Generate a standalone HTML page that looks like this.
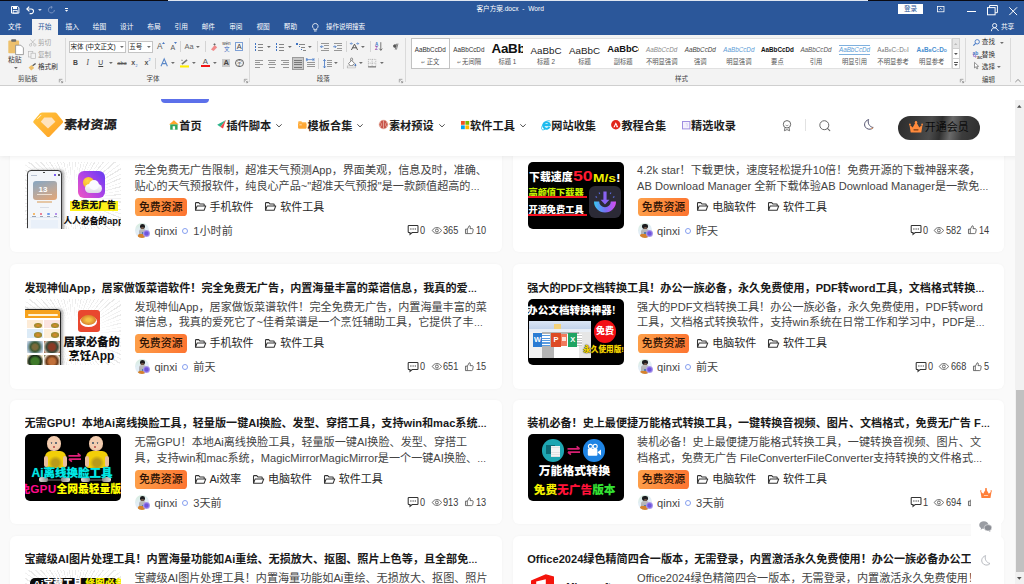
<!DOCTYPE html>
<html lang="zh-CN"><head><meta charset="utf-8"><title>客户方案.docx - Word</title>
<style>
*{box-sizing:border-box}
html,body{margin:0;padding:0}
body{width:1024px;height:584px;overflow:hidden;position:relative;background:#fff;font-family:"Liberation Sans","Noto Sans CJK SC",sans-serif;color:#222}
.abs,.abs>*{position:absolute}
/* ---------- Word ribbon ---------- */
#word{position:absolute;left:0;top:0;width:1024px;height:86px;background:#f3f3f3;overflow:hidden;z-index:30}
#word .blue{position:absolute;left:0;top:0;width:1024px;height:34.5px;background:#2b579a}
#word .t{position:absolute;white-space:nowrap;font-size:6.7px;line-height:8px;color:#fff}
#word .k{position:absolute;white-space:nowrap;font-size:6.6px;line-height:8px;color:#333}
#word .g{color:#a0a0a0}
#word .sep{position:absolute;width:1px;background:#dadada;top:38px;height:44px}
#word .ms{position:absolute;width:1px;background:#d4d4d4;height:11px}
#word .dd{position:absolute;width:0;height:0;border-left:1.9px solid transparent;border-right:1.9px solid transparent;border-top:2.1px solid #707070}
#word svg{position:absolute;overflow:visible}
/* ---------- web page ---------- */
#web{position:absolute;left:0;top:86px;width:1024px;height:498px;background:#fafafa;overflow:hidden}
#hdr{position:absolute;left:0;top:0;width:1024px;height:70px;background:#fff;box-shadow:0 1px 5px rgba(0,0,0,.07);z-index:10}
.card{position:absolute;width:491.5px;height:124.2px;background:#fff;border-radius:6px;box-shadow:0 0 3px rgba(0,0,0,.035)}
.card .ttl{position:absolute;left:14.5px;top:16.2px;width:470px;font-size:11.1px;line-height:15px;font-weight:bold;color:#1a1a1a;white-space:nowrap;overflow:hidden}
.card .th{position:absolute;left:15px;top:34.2px;width:96px;height:66.6px;border-radius:5px;overflow:hidden}
.card .ds{position:absolute;left:124.4px;top:35.2px;width:360px;font-size:11.1px;line-height:15.6px;color:#444;white-space:nowrap}
.card .tags{position:absolute;left:125px;top:70.1px;height:18.4px;white-space:nowrap;font-size:11px;line-height:19.4px;color:#262626}
.card .vip{position:absolute;left:0;top:0;height:18.4px;width:51.5px;border-radius:3.6px;background:linear-gradient(100deg,#fda04a,#fd7430);color:#2e1406;text-align:center;font-size:10.9px;line-height:19.4px;font-weight:500}
.card .meta{position:absolute;left:125px;top:95.6px;height:14px;white-space:nowrap;font-size:11.1px;line-height:14px;color:#444}
.card .st{position:absolute;top:94.9px;height:14px;font-size:9.6px;line-height:14px;color:#444;white-space:nowrap}
.card svg{position:absolute;overflow:visible}
.el{font-size:.84em}
</style></head><body>
<div id="word">
<div class="blue"></div>
<div style="position:absolute;left:0;top:0;width:168px;height:1.2px;background:#0a0a12"></div>
<div style="position:absolute;left:168px;top:0;width:700px;height:1px;background:#dfe6f1"></div>
<div style="position:absolute;left:868px;top:0;width:156px;height:1.2px;background:#0a0a12"></div>
<div style="position:absolute;left:32px;top:19px;width:26px;height:16px;background:#f3f3f3"></div>
<svg style="left:10.6px;top:6.2px" width="8.4" height="7.6" viewBox="0 0 8.4 7.6"><path d="M0.5 0.5h6.2l1.2 1.2v5.4h-7.4z" fill="none" stroke="#fff" stroke-width="1"/><rect x="2" y="0.8" width="4" height="2.2" fill="#fff"/><rect x="2.2" y="4.6" width="4" height="2.6" fill="none" stroke="#fff" stroke-width=".8"/></svg>
<svg style="left:26px;top:5.8px" width="9" height="8" viewBox="0 0 9 8"><path d="M3.2 0.6L0.8 3l2.6 2.4" fill="none" stroke="#fff" stroke-width="1.1"/><path d="M1 3h4.2a2.3 2.3 0 0 1 0 4.6H3.6" fill="none" stroke="#fff" stroke-width="1.1"/></svg>
<svg style="left:37.50px;top:8.75px" width="3.8" height="2.1" viewBox="0 0 3.8 2.1"><path d="M0 0h3.8L1.9 2.1z" fill="#d5def0"/></svg>
<svg style="left:47.5px;top:6px" width="7" height="7.6" viewBox="0 0 7 7.6"><path d="M4.6 1.2A3 3 0 1 0 6.4 4" fill="none" stroke="#7f97c4" stroke-width=".9"/><path d="M3.4 0.2v2.4" stroke="#7f97c4" stroke-width=".9"/></svg>
<div style="position:absolute;left:65.3px;top:8.1px;width:3.2px;height:.9px;background:#fff"></div>
<svg style="left:65.30px;top:9.55px" width="3.2" height="1.7" viewBox="0 0 3.2 1.7"><path d="M0 0h3.2L1.6 1.7z" fill="#fff"/></svg>
<div class="t" style="left:476.5px;top:4.80px;font-size:6.6px">客户方案.docx&nbsp; -&nbsp; Word</div>
<div style="position:absolute;left:898.4px;top:3.8px;width:24.4px;height:10.2px;background:#fff;color:#2b579a;font-size:6.6px;line-height:10.2px;text-align:center">登录</div>
<svg style="left:936.8px;top:6px" width="7.4" height="6.2" viewBox="0 0 7.4 6.2"><rect x=".4" y=".4" width="6.6" height="5.4" fill="none" stroke="#fff" stroke-width=".8"/><path d="M2.4 3.8L3.7 2.3 5 3.8" fill="none" stroke="#fff" stroke-width=".8"/></svg>
<div style="position:absolute;left:967.4px;top:10.8px;width:8.5px;height:1px;background:#fff"></div>
<svg style="left:986.8px;top:5.4px" width="11" height="10.4" viewBox="0 0 11 10.4"><rect x=".5" y="2.6" width="7.6" height="7.2" fill="none" stroke="#fff" stroke-width="1"/><path d="M2.6 2.6V.5h7.8v7.2H8.2" fill="none" stroke="#fff" stroke-width="1"/></svg>
<svg style="left:1008.7px;top:6.7px" width="8.4" height="8.4" viewBox="0 0 8.4 8.4"><path d="M.3 .3l7.8 7.8M8.1 .3L.3 8.1" stroke="#fff" stroke-width="1"/></svg>
<svg style="left:990.7px;top:23px" width="8" height="8.6" viewBox="0 0 8 8.6"><circle cx="3.6" cy="2.6" r="2.1" fill="none" stroke="#fff" stroke-width=".9"/><path d="M.4 8.2c0-2.2 1.3-3.3 3.2-3.3 1 0 1.7.3 2.2.8" fill="none" stroke="#fff" stroke-width=".9"/><path d="M5.6 5.6l2 2.4" stroke="#fff" stroke-width=".9"/></svg>
<div class="t" style="left:1000.9px;top:23.20px;">共享</div>
<div class="t" style="left:8px;top:23.20px;">文件</div>
<div class="t" style="left:65.6px;top:23.20px;">插入</div>
<div class="t" style="left:92.75px;top:23.20px;">绘图</div>
<div class="t" style="left:120px;top:23.20px;">设计</div>
<div class="t" style="left:147.3px;top:23.20px;">布局</div>
<div class="t" style="left:174.5px;top:23.20px;">引用</div>
<div class="t" style="left:201.7px;top:23.20px;">邮件</div>
<div class="t" style="left:229.2px;top:23.20px;">审阅</div>
<div class="t" style="left:256.4px;top:23.20px;">视图</div>
<div class="t" style="left:283.8px;top:23.20px;">帮助</div>
<div class="t" style="left:38px;top:23.20px;color:#2b579a">开始</div>
<svg style="left:312px;top:22.6px" width="6.6" height="9" viewBox="0 0 6.6 9"><path d="M3.3 .5a2.7 2.7 0 0 1 1.5 5v1.2H1.8V5.5A2.7 2.7 0 0 1 3.3 .5z" fill="none" stroke="#fff" stroke-width=".8"/><path d="M2 8h2.6" stroke="#fff" stroke-width=".8"/></svg>
<div class="t" style="left:326px;top:23.20px;font-size:6.5px">操作说明搜索</div>
<div style="position:absolute;left:0;top:84.6px;width:1024px;height:1.2px;background:#cfcfcf"></div>
<div class="sep" style="left:64.7px"></div>
<div class="sep" style="left:249.2px"></div>
<div class="sep" style="left:405.4px"></div>
<div class="sep" style="left:965px"></div>
<div class="sep" style="left:1010px"></div>
<svg style="left:8px;top:39.2px" width="16" height="16" viewBox="0 0 16 16"><rect x=".3" y="1.6" width="10.8" height="12.6" rx=".8" fill="#edc06c"/><rect x="3.2" y=".2" width="5" height="2.6" rx=".8" fill="#6b6b6b"/><path d="M7.6 6.2h5.2l2.6 2.6v6.8H7.6z" fill="#fff" stroke="#8a8a8a" stroke-width=".8"/></svg>
<div class="k" style="left:8px;top:56.40px;font-size:6.8px">粘贴</div>
<svg style="left:13.70px;top:66.75px" width="3.8" height="2.1" viewBox="0 0 3.8 2.1"><path d="M0 0h3.8L1.9 2.1z" fill="#6e6e6e"/></svg>
<svg style="left:28.5px;top:39px" width="7.5" height="7.5" viewBox="0 0 7.5 7.5"><path d="M1.4 .4l4 4.6M6 .4L2 5" stroke="#b9b9b9" stroke-width=".8"/><circle cx="1.6" cy="6" r="1.2" fill="none" stroke="#b9b9b9" stroke-width=".7"/><circle cx="5.8" cy="6" r="1.2" fill="none" stroke="#b9b9b9" stroke-width=".7"/></svg>
<div class="k g" style="left:38px;top:38.60px;">剪切</div>
<svg style="left:28px;top:51px" width="8" height="8" viewBox="0 0 8 8"><rect x=".4" y=".4" width="4.4" height="5.6" fill="none" stroke="#b9b9b9" stroke-width=".7"/><rect x="3" y="2.2" width="4.4" height="5.4" fill="#f3f3f3" stroke="#b9b9b9" stroke-width=".7"/></svg>
<div class="k g" style="left:38px;top:51.00px;">复制</div>
<svg style="left:28.2px;top:63px" width="8.5" height="8.5" viewBox="0 0 8.5 8.5"><path d="M.6 4.4l3-2.4 2.6 3-3 2.6z" fill="#edc06c"/><path d="M4.6 2.8L7.6 .4" stroke="#555" stroke-width="1.3"/></svg>
<div class="k" style="left:38px;top:63.30px;">格式刷</div>
<div class="k" style="left:18px;top:75.40px;font-size:6.5px;color:#444">剪贴板</div>
<svg style="left:58.6px;top:79px" width="4" height="4" viewBox="0 0 4 4"><path d="M.3 3.4V.3h3.1" fill="none" stroke="#777" stroke-width=".6"/><path d="M1.4 1.4l2.2 2.2M3.7 1.9v1.8H1.9" fill="none" stroke="#777" stroke-width=".6"/></svg>
<svg style="left:243.6px;top:79px" width="4" height="4" viewBox="0 0 4 4"><path d="M.3 3.4V.3h3.1" fill="none" stroke="#777" stroke-width=".6"/><path d="M1.4 1.4l2.2 2.2M3.7 1.9v1.8H1.9" fill="none" stroke="#777" stroke-width=".6"/></svg>
<svg style="left:399.4px;top:79px" width="4" height="4" viewBox="0 0 4 4"><path d="M.3 3.4V.3h3.1" fill="none" stroke="#777" stroke-width=".6"/><path d="M1.4 1.4l2.2 2.2M3.7 1.9v1.8H1.9" fill="none" stroke="#777" stroke-width=".6"/></svg>
<svg style="left:959.5px;top:79px" width="4" height="4" viewBox="0 0 4 4"><path d="M.3 3.4V.3h3.1" fill="none" stroke="#777" stroke-width=".6"/><path d="M1.4 1.4l2.2 2.2M3.7 1.9v1.8H1.9" fill="none" stroke="#777" stroke-width=".6"/></svg>
<div style="position:absolute;left:69px;top:40.6px;width:57.3px;height:12.4px;background:#fff;border:.8px solid #c4c4c4"></div>
<div class="k" style="left:70.6px;top:42.90px;font-size:6.5px;color:#222">宋体 (中文正文)</div>
<svg style="left:120.40px;top:46.05px" width="3.8" height="2.1" viewBox="0 0 3.8 2.1"><path d="M0 0h3.8L1.9 2.1z" fill="#6e6e6e"/></svg>
<div style="position:absolute;left:127.6px;top:40.6px;width:25px;height:12.4px;background:#fff;border:.8px solid #c4c4c4"></div>
<div class="k" style="left:129.2px;top:42.90px;font-size:6.5px;color:#222">五号</div>
<svg style="left:146.70px;top:46.05px" width="3.8" height="2.1" viewBox="0 0 3.8 2.1"><path d="M0 0h3.8L1.9 2.1z" fill="#6e6e6e"/></svg>
<div class="k" style="left:157px;top:43.30px;font-size:8.2px;color:#555">A</div>
<svg style="left:161.6px;top:42.2px" width="3" height="2" viewBox="0 0 3 2"><path d="M0 2L1.5 0 3 2z" fill="#4a78c2"/></svg>
<div class="k" style="left:170.5px;top:43.80px;font-size:7px;color:#555">A</div>
<svg style="left:174.2px;top:42.4px" width="3" height="2" viewBox="0 0 3 2"><path d="M0 0h3L1.5 2z" fill="#4a78c2"/></svg>
<div class="ms" style="left:180.4px;top:41.4px"></div>
<div class="k" style="left:184.6px;top:43.00px;font-size:7.4px;color:#666">Aa</div>
<svg style="left:195.50px;top:46.05px" width="3.8" height="2.1" viewBox="0 0 3.8 2.1"><path d="M0 0h3.8L1.9 2.1z" fill="#6e6e6e"/></svg>
<div class="ms" style="left:205px;top:41.4px"></div>
<svg style="left:210px;top:42.6px" width="8" height="8" viewBox="0 0 8 8"><path d="M1 6.4L4.6 2l2.6 2.2L3.6 8z" fill="#f08a8a"/><path d="M3.2 1.2l1.6-.9 1 1.2-1.3 1z" fill="#666"/></svg>
<div class="k" style="left:222.2px;top:40.20px;font-size:4.6px;color:#444">wén</div>
<div class="k" style="left:223.9px;top:44.90px;font-size:5.6px;color:#3a6bc0">文</div>
<div style="position:absolute;left:235.3px;top:42.4px;width:8px;height:8.6px;border:.9px solid #7da0d6;color:#444;font-size:7.4px;line-height:7.2px;text-align:center">A</div>
<div class="k" style="left:72.9px;top:59.00px;font-weight:bold;font-size:6.8px;color:#444">B</div>
<div class="k" style="left:86.4px;top:59.00px;font-style:italic;font-family:'Liberation Serif',serif;font-size:7.4px;color:#444">I</div>
<div class="k" style="left:98.3px;top:59.00px;text-decoration:underline;font-size:6.8px;color:#444">U</div>
<svg style="left:108.50px;top:62.35px" width="3.8" height="2.1" viewBox="0 0 3.8 2.1"><path d="M0 0h3.8L1.9 2.1z" fill="#6e6e6e"/></svg>
<div class="k" style="left:117.3px;top:59.20px;font-size:5.8px;text-decoration:line-through;color:#555">abc</div>
<div class="k" style="left:131.2px;top:59.30px;font-size:7px;font-weight:bold;color:#555">x</div>
<div class="k" style="left:135.4px;top:61.60px;font-size:3.6px;color:#3a6bc0">2</div>
<div class="k" style="left:144.4px;top:59.30px;font-size:7px;font-weight:bold;color:#555">x</div>
<div class="k" style="left:148.6px;top:56.40px;font-size:3.6px;color:#3a6bc0">2</div>
<div class="ms" style="left:155.4px;top:57.6px"></div>
<svg style="left:159.8px;top:58.4px" width="8.4" height="9" viewBox="0 0 8.4 9"><path d="M1 8.2L4.2 .8l3.2 7.4M2.3 5.6h3.8" fill="none" stroke="#5b88c8" stroke-width="1.1"/></svg>
<svg style="left:170.70px;top:62.35px" width="3.8" height="2.1" viewBox="0 0 3.8 2.1"><path d="M0 0h3.8L1.9 2.1z" fill="#6e6e6e"/></svg>
<svg style="left:179.9px;top:58px" width="9" height="10" viewBox="0 0 9 10"><path d="M1.4 5.6L6.6 1.2l1 1.2-5.2 4.4z" fill="#777"/><path d="M1 2.2l2 .2" stroke="#777" stroke-width=".7"/><rect x="0" y="7.4" width="9" height="2.1" fill="#ffee00"/></svg>
<svg style="left:192.10px;top:62.35px" width="3.8" height="2.1" viewBox="0 0 3.8 2.1"><path d="M0 0h3.8L1.9 2.1z" fill="#6e6e6e"/></svg>
<div class="k" style="left:202.7px;top:57.80px;font-size:7.8px;color:#555">A</div>
<div style="position:absolute;left:201.1px;top:65.4px;width:8.8px;height:2.1px;background:#f01414"></div>
<svg style="left:213.00px;top:62.35px" width="3.8" height="2.1" viewBox="0 0 3.8 2.1"><path d="M0 0h3.8L1.9 2.1z" fill="#6e6e6e"/></svg>
<div style="position:absolute;left:222.4px;top:59.3px;width:7.6px;height:7.6px;background:#c9c9c9;color:#444;font-size:7.6px;line-height:7.6px;text-align:center;font-weight:bold">A</div>
<div style="position:absolute;left:235px;top:58.8px;width:8.6px;height:8.6px;border:.7px solid #666;border-radius:50%;color:#555;font-size:5.2px;line-height:7.2px;text-align:center">字</div>
<div class="k" style="left:146.6px;top:75.40px;font-size:6.5px;color:#444">字体</div>
<div style="position:absolute;left:255px;top:43.40px;width:1.4px;height:1.4px;background:#3f74c4"></div>
<div style="position:absolute;left:255px;top:46.30px;width:1.4px;height:1.4px;background:#3f74c4"></div>
<div style="position:absolute;left:255px;top:49.20px;width:1.4px;height:1.4px;background:#3f74c4"></div>
<div style="position:absolute;left:257.60px;top:43.70px;width:5.4px;height:0.8px;background:#858585"></div><div style="position:absolute;left:257.60px;top:46.60px;width:5.4px;height:0.8px;background:#858585"></div><div style="position:absolute;left:257.60px;top:49.50px;width:5.4px;height:0.8px;background:#858585"></div>
<svg style="left:267.10px;top:45.95px" width="3.8" height="2.1" viewBox="0 0 3.8 2.1"><path d="M0 0h3.8L1.9 2.1z" fill="#6e6e6e"/></svg>
<div style="position:absolute;left:276.2px;top:43.20px;width:.9px;height:2px;background:#3f74c4"></div>
<div style="position:absolute;left:276.2px;top:46.10px;width:.9px;height:2px;background:#3f74c4"></div>
<div style="position:absolute;left:276.2px;top:49.00px;width:.9px;height:2px;background:#3f74c4"></div>
<div style="position:absolute;left:278.60px;top:43.70px;width:5.4px;height:0.8px;background:#858585"></div><div style="position:absolute;left:278.60px;top:46.60px;width:5.4px;height:0.8px;background:#858585"></div><div style="position:absolute;left:278.60px;top:49.50px;width:5.4px;height:0.8px;background:#858585"></div>
<svg style="left:287.80px;top:45.95px" width="3.8" height="2.1" viewBox="0 0 3.8 2.1"><path d="M0 0h3.8L1.9 2.1z" fill="#6e6e6e"/></svg>
<div style="position:absolute;left:296.4px;top:43px;width:1.2px;height:1.6px;background:#3f74c4"></div><div style="position:absolute;left:298.6px;top:45.9px;width:1.2px;height:1.6px;background:#3f74c4"></div><div style="position:absolute;left:300.8px;top:48.8px;width:1.2px;height:1.6px;background:#3f74c4"></div>
<div style="position:absolute;left:298.60px;top:43.70px;width:6px;height:0.8px;background:#858585"></div><div style="position:absolute;left:301.00px;top:46.60px;width:4px;height:0.8px;background:#858585"></div><div style="position:absolute;left:303.20px;top:49.50px;width:2.4px;height:0.8px;background:#858585"></div>
<svg style="left:307.80px;top:45.95px" width="3.8" height="2.1" viewBox="0 0 3.8 2.1"><path d="M0 0h3.8L1.9 2.1z" fill="#6e6e6e"/></svg>
<div class="ms" style="left:316.5px;top:41.4px"></div>
<div style="position:absolute;left:320.60px;top:42.80px;width:8.8px;height:0.8px;background:#979797"></div><div style="position:absolute;left:324.40px;top:45.30px;width:5px;height:0.8px;background:#979797"></div><div style="position:absolute;left:324.40px;top:47.80px;width:5px;height:0.8px;background:#979797"></div><div style="position:absolute;left:320.60px;top:50.30px;width:8.8px;height:0.8px;background:#979797"></div>
<svg style="left:320.4px;top:45.2px" width="3.6" height="3.4" viewBox="0 0 3.6 3.4"><path d="M3.4 1.7H.6M1.8 .4L.5 1.7l1.3 1.3" fill="none" stroke="#3f74c4" stroke-width=".8"/></svg>
<div style="position:absolute;left:333.60px;top:42.80px;width:8.8px;height:0.8px;background:#979797"></div><div style="position:absolute;left:337.40px;top:45.30px;width:5px;height:0.8px;background:#979797"></div><div style="position:absolute;left:337.40px;top:47.80px;width:5px;height:0.8px;background:#979797"></div><div style="position:absolute;left:333.60px;top:50.30px;width:8.8px;height:0.8px;background:#979797"></div>
<svg style="left:333.4px;top:45.2px" width="3.6" height="3.4" viewBox="0 0 3.6 3.4"><path d="M.2 1.7H3M1.8 .4l1.3 1.3-1.3 1.3" fill="none" stroke="#3f74c4" stroke-width=".8"/></svg>
<div class="ms" style="left:346.2px;top:41.4px"></div>
<svg style="left:350.4px;top:42.4px" width="9" height="8.4" viewBox="0 0 9 8.4"><path d="M1.4 8L4.5 2.2 7.6 8M2.6 5.8h3.8" fill="none" stroke="#555" stroke-width="1"/><path d="M.4 1.6h2.4M6.2 1.6h2.4M1.4 .5L.3 1.6l1.1 1.1M7.6 .5l1.1 1.1-1.1 1.1" fill="none" stroke="#3f74c4" stroke-width=".7"/></svg>
<svg style="left:361.30px;top:45.95px" width="3.8" height="2.1" viewBox="0 0 3.8 2.1"><path d="M0 0h3.8L1.9 2.1z" fill="#6e6e6e"/></svg>
<div class="ms" style="left:370.3px;top:41.4px"></div>
<div class="k" style="left:375px;top:40.60px;font-size:4.6px;color:#3f74c4;font-weight:bold">A</div>
<div class="k" style="left:375.1px;top:45.20px;font-size:4.6px;color:#8a3fb0;font-weight:bold">Z</div>
<svg style="left:379.2px;top:42.4px" width="3.6" height="9" viewBox="0 0 3.6 9"><path d="M1.8 .2v8M.3 6.6l1.5 1.8 1.5-1.8" fill="none" stroke="#555" stroke-width=".8"/></svg>
<svg style="left:393.4px;top:43.4px" width="5.4" height="7" viewBox="0 0 5.4 7"><path d="M2.2 6.6L3.8 .6M3.4 6.6L5 .6" stroke="#555" stroke-width=".7"/><path d="M.4 3.8a1.6 1.6 0 0 1 3 -1.6" fill="#555"/><circle cx="1.8" cy="3.4" r="1.4" fill="#555"/></svg>
<div style="position:absolute;left:254.80px;top:60.20px;width:8px;height:0.8px;background:#979797"></div><div style="position:absolute;left:254.80px;top:62.30px;width:5.6px;height:0.8px;background:#979797"></div><div style="position:absolute;left:254.80px;top:64.40px;width:8px;height:0.8px;background:#979797"></div><div style="position:absolute;left:254.80px;top:66.50px;width:5.6px;height:0.8px;background:#979797"></div>
<div style="position:absolute;left:268.00px;top:60.20px;width:8px;height:0.8px;background:#979797"></div><div style="position:absolute;left:269.40px;top:62.30px;width:5.2px;height:0.8px;background:#979797"></div><div style="position:absolute;left:268.00px;top:64.40px;width:8px;height:0.8px;background:#979797"></div><div style="position:absolute;left:269.40px;top:66.50px;width:5.2px;height:0.8px;background:#979797"></div>
<div style="position:absolute;left:281.00px;top:60.20px;width:8px;height:0.8px;background:#979797"></div><div style="position:absolute;left:283.40px;top:62.30px;width:5.6px;height:0.8px;background:#979797"></div><div style="position:absolute;left:281.00px;top:64.40px;width:8px;height:0.8px;background:#979797"></div><div style="position:absolute;left:283.40px;top:66.50px;width:5.6px;height:0.8px;background:#979797"></div>
<div style="position:absolute;left:292.2px;top:57.2px;width:11.7px;height:12.6px;background:#c8c8c8;border:.9px solid #9a9a9a"></div>
<div style="position:absolute;left:294.20px;top:60.20px;width:7.8px;height:0.8px;background:#777"></div><div style="position:absolute;left:294.20px;top:62.30px;width:7.8px;height:0.8px;background:#777"></div><div style="position:absolute;left:294.20px;top:64.40px;width:7.8px;height:0.8px;background:#777"></div><div style="position:absolute;left:294.20px;top:66.50px;width:7.8px;height:0.8px;background:#777"></div>
<div style="position:absolute;left:306.60px;top:61.80px;width:8px;height:0.8px;background:#979797"></div><div style="position:absolute;left:306.60px;top:64.00px;width:8px;height:0.8px;background:#979797"></div><div style="position:absolute;left:306.60px;top:66.20px;width:8px;height:0.8px;background:#979797"></div>
<svg style="left:306.4px;top:58px" width="8.4" height="3.2" viewBox="0 0 8.4 3.2"><path d="M.4 0v3.2M8 0v3.2M.6 1.6h7.2M2 .5L.8 1.6 2 2.7M6.4 .5l1.2 1.1-1.2 1.1" fill="none" stroke="#3f74c4" stroke-width=".7"/></svg>
<div class="ms" style="left:318.4px;top:57.6px"></div>
<svg style="left:323.2px;top:58.6px" width="3" height="9.4" viewBox="0 0 3 9.4"><path d="M1.5 .4v8.6M.3 2L1.5 .5 2.7 2M.3 7.4l1.2 1.5 1.2-1.5" fill="none" stroke="#3f74c4" stroke-width=".8"/></svg>
<div style="position:absolute;left:326.80px;top:60.00px;width:4.8px;height:0.8px;background:#979797"></div><div style="position:absolute;left:326.80px;top:62.10px;width:4.8px;height:0.8px;background:#979797"></div><div style="position:absolute;left:326.80px;top:64.20px;width:4.8px;height:0.8px;background:#979797"></div><div style="position:absolute;left:326.80px;top:66.30px;width:4.8px;height:0.8px;background:#979797"></div>
<svg style="left:334.10px;top:62.35px" width="3.8" height="2.1" viewBox="0 0 3.8 2.1"><path d="M0 0h3.8L1.9 2.1z" fill="#6e6e6e"/></svg>
<div class="ms" style="left:343px;top:57.6px"></div>
<svg style="left:347px;top:58px" width="9.6" height="10" viewBox="0 0 9.6 10"><path d="M1.6 5.6L4.6 2.4l3 3-2.6 2.4H3.2z" fill="#fff" stroke="#666" stroke-width=".8"/><path d="M3.6 2.8V1a1 1 0 0 1 2 0v1.6" fill="none" stroke="#666" stroke-width=".7"/><path d="M8.4 5.4c.8 1 .9 1.6 .9 2a.9 .9 0 0 1-1.8 0c0-.4 .1-1 .9-2z" fill="#3f74c4"/><rect x=".2" y="8" width="8.4" height="1.9" fill="#fff" stroke="#999" stroke-width=".5"/></svg>
<svg style="left:359.10px;top:62.35px" width="3.8" height="2.1" viewBox="0 0 3.8 2.1"><path d="M0 0h3.8L1.9 2.1z" fill="#6e6e6e"/></svg>
<svg style="left:368px;top:59px" width="8.2" height="8.2" viewBox="0 0 8.2 8.2"><rect x=".4" y=".4" width="7.4" height="7.4" fill="none" stroke="#999" stroke-width=".6" stroke-dasharray="1 .8"/><path d="M4.1 .4v7.4M.4 4.1h7.4" stroke="#999" stroke-width=".6" stroke-dasharray="1 .8"/><path d="M.2 7.9h7.8" stroke="#555" stroke-width=".9"/></svg>
<svg style="left:379.70px;top:62.35px" width="3.8" height="2.1" viewBox="0 0 3.8 2.1"><path d="M0 0h3.8L1.9 2.1z" fill="#6e6e6e"/></svg>
<div class="k" style="left:316.8px;top:75.40px;font-size:6.5px;color:#444">段落</div>
<div style="position:absolute;left:411px;top:38.4px;width:540.6px;height:30.8px;background:#fff;border:.6px solid #e1e1e1"></div>
<div style="position:absolute;left:411px;top:38.4px;width:38.8px;height:30.8px;border:1.4px solid #c2c2c2"></div>
<div style="position:absolute;left:411.00px;top:43px;width:38.57px;height:13px;line-height:13px;font-size:6.3px;text-align:center;white-space:nowrap;overflow:hidden"><span style="font-size:6.3px;color:#333">AaBbCcDd</span></div><div style="position:absolute;left:411.00px;top:58.2px;width:38.57px;height:8px;line-height:8px;font-size:6.3px;color:#555;text-align:center;white-space:nowrap"><span style="font-size:5px;color:#777">↵ </span>正文</div>
<div style="position:absolute;left:449.57px;top:43px;width:38.57px;height:13px;line-height:13px;font-size:6.3px;text-align:center;white-space:nowrap;overflow:hidden"><span style="font-size:6.3px;color:#333">AaBbCcDd</span></div><div style="position:absolute;left:449.57px;top:58.2px;width:38.57px;height:8px;line-height:8px;font-size:6.3px;color:#555;text-align:center;white-space:nowrap"><span style="font-size:5px;color:#777">↵ </span>无间隔</div>
<div style="position:absolute;left:488.14px;top:42px;width:38.57px;height:13px;line-height:13px;font-size:13.4px;text-align:center;white-space:nowrap;overflow:hidden"><span style="font-weight:bold;color:#111;display:inline-block;width:32px;overflow:hidden;text-align:left;vertical-align:top;letter-spacing:-.2px">AaBb</span></div><div style="position:absolute;left:488.14px;top:58.2px;width:38.57px;height:8px;line-height:8px;font-size:6.3px;color:#555;text-align:center;white-space:nowrap">标题 1</div>
<div style="position:absolute;left:526.71px;top:43.6px;width:38.57px;height:13px;line-height:13px;font-size:9.8px;text-align:center;white-space:nowrap;overflow:hidden"><span style="color:#222">AaBbC</span></div><div style="position:absolute;left:526.71px;top:58.2px;width:38.57px;height:8px;line-height:8px;font-size:6.3px;color:#555;text-align:center;white-space:nowrap">标题 2</div>
<div style="position:absolute;left:565.28px;top:43.6px;width:38.57px;height:13px;line-height:13px;font-size:9.8px;text-align:center;white-space:nowrap;overflow:hidden"><span style="color:#222">AaBbC</span></div><div style="position:absolute;left:565.28px;top:58.2px;width:38.57px;height:8px;line-height:8px;font-size:6.3px;color:#555;text-align:center;white-space:nowrap">标题</div>
<div style="position:absolute;left:603.85px;top:43.4px;width:38.57px;height:13px;line-height:13px;font-size:9.3px;text-align:center;white-space:nowrap;overflow:hidden"><span style="font-weight:bold;color:#111;display:inline-block;width:31.6px;overflow:hidden;text-align:left;vertical-align:top">AaBbCc</span></div><div style="position:absolute;left:603.85px;top:58.2px;width:38.57px;height:8px;line-height:8px;font-size:6.3px;color:#555;text-align:center;white-space:nowrap">副标题</div>
<div style="position:absolute;left:642.42px;top:43px;width:38.57px;height:13px;line-height:13px;font-size:6.3px;text-align:center;white-space:nowrap;overflow:hidden"><span style="font-size:6.3px;color:#8a8a8a;font-style:italic">AaBbCcDd</span></div><div style="position:absolute;left:642.42px;top:58.2px;width:38.57px;height:8px;line-height:8px;font-size:6.3px;color:#555;text-align:center;white-space:nowrap">不明显强调</div>
<div style="position:absolute;left:680.99px;top:43px;width:38.57px;height:13px;line-height:13px;font-size:6.3px;text-align:center;white-space:nowrap;overflow:hidden"><span style="font-size:6.3px;color:#444;font-style:italic">AaBbCcDd</span></div><div style="position:absolute;left:680.99px;top:58.2px;width:38.57px;height:8px;line-height:8px;font-size:6.3px;color:#555;text-align:center;white-space:nowrap">强调</div>
<div style="position:absolute;left:719.56px;top:43px;width:38.57px;height:13px;line-height:13px;font-size:6.3px;text-align:center;white-space:nowrap;overflow:hidden"><span style="font-size:6.3px;color:#5b9bd5;font-style:italic">AaBbCcDd</span></div><div style="position:absolute;left:719.56px;top:58.2px;width:38.57px;height:8px;line-height:8px;font-size:6.3px;color:#555;text-align:center;white-space:nowrap">明显强调</div>
<div style="position:absolute;left:758.13px;top:43px;width:38.57px;height:13px;line-height:13px;font-size:6.3px;text-align:center;white-space:nowrap;overflow:hidden"><span style="font-size:6.3px;color:#111;font-weight:bold">AaBbCcDd</span></div><div style="position:absolute;left:758.13px;top:58.2px;width:38.57px;height:8px;line-height:8px;font-size:6.3px;color:#555;text-align:center;white-space:nowrap">要点</div>
<div style="position:absolute;left:796.70px;top:43px;width:38.57px;height:13px;line-height:13px;font-size:6.3px;text-align:center;white-space:nowrap;overflow:hidden"><span style="font-size:6.3px;color:#555;font-style:italic">AaBbCcDd</span></div><div style="position:absolute;left:796.70px;top:58.2px;width:38.57px;height:8px;line-height:8px;font-size:6.3px;color:#555;text-align:center;white-space:nowrap">引用</div>
<div style="position:absolute;left:835.27px;top:43px;width:38.57px;height:13px;line-height:13px;font-size:6.3px;text-align:center;white-space:nowrap;overflow:hidden"><span style="font-size:6.3px;color:#5b9bd5;font-style:italic">AaBbCcDd</span></div><div style="position:absolute;left:835.27px;top:58.2px;width:38.57px;height:8px;line-height:8px;font-size:6.3px;color:#555;text-align:center;white-space:nowrap">明显引用</div>
<div style="position:absolute;left:838.67px;top:44.6px;width:31.8px;height:.8px;background:#7fb0de"></div><div style="position:absolute;left:838.67px;top:54px;width:31.8px;height:.8px;background:#7fb0de"></div>
<div style="position:absolute;left:873.84px;top:43px;width:38.57px;height:13px;line-height:13px;font-size:6.3px;text-align:center;white-space:nowrap;overflow:hidden"><span style="font-size:6.4px;color:#777;font-variant:small-caps;letter-spacing:.1px">AaBbCcDdI</span></div><div style="position:absolute;left:873.84px;top:58.2px;width:38.57px;height:8px;line-height:8px;font-size:6.3px;color:#555;text-align:center;white-space:nowrap">不明显参考</div>
<div style="position:absolute;left:912.41px;top:43px;width:38.57px;height:13px;line-height:13px;font-size:6.3px;text-align:center;white-space:nowrap;overflow:hidden"><span style="font-size:6.4px;color:#4a8fd0;font-weight:bold;font-variant:small-caps;letter-spacing:.05px">AaBbCcDd</span></div><div style="position:absolute;left:912.41px;top:58.2px;width:38.57px;height:8px;line-height:8px;font-size:6.3px;color:#555;text-align:center;white-space:nowrap">明显参考</div>
<div style="position:absolute;left:952.2px;top:38.4px;width:7.6px;height:30.8px;background:#fff;border:.6px solid #d0d0d0"></div>
<div style="position:absolute;left:952.2px;top:38.4px;width:7.6px;height:10.4px;background:#e6e6e6;border:.6px solid #d0d0d0"></div>
<div style="position:absolute;left:952.2px;top:48.8px;width:7.6px;height:10.2px;border-bottom:.6px solid #d0d0d0"></div>
<svg style="left:954.3px;top:42.6px" width="3.4" height="2" viewBox="0 0 3.4 2"><path d="M0 2L1.7 0l1.7 2z" fill="#bbb"/></svg>
<svg style="left:954.10px;top:53.15px" width="3.8" height="2.1" viewBox="0 0 3.8 2.1"><path d="M0 0h3.8L1.9 2.1z" fill="#555"/></svg>
<div style="position:absolute;left:954.2px;top:62.2px;width:3.6px;height:.8px;background:#555"></div>
<svg style="left:954.10px;top:63.75px" width="3.8" height="2.1" viewBox="0 0 3.8 2.1"><path d="M0 0h3.8L1.9 2.1z" fill="#555"/></svg>
<div class="k" style="left:675px;top:75.40px;font-size:6.5px;color:#444">样式</div>
<svg style="left:973.4px;top:38.6px" width="7" height="7" viewBox="0 0 7 7"><circle cx="4.2" cy="2.8" r="2.2" fill="none" stroke="#3f74c4" stroke-width=".9"/><path d="M2.6 4.4L.4 6.6" stroke="#3f74c4" stroke-width="1.1"/></svg>
<div class="k" style="left:981.8px;top:38.20px;">查找</div>
<svg style="left:999.70px;top:41.55px" width="3.8" height="2.1" viewBox="0 0 3.8 2.1"><path d="M0 0h3.8L1.9 2.1z" fill="#6e6e6e"/></svg>
<div class="k" style="left:972.6px;top:48.60px;font-size:5px;color:#3f74c4;font-weight:bold">ab</div>
<div class="k" style="left:977px;top:53.20px;font-size:5px;color:#555;font-weight:bold">ac</div>
<svg style="left:973.2px;top:54.4px" width="4.4" height="3.6" viewBox="0 0 4.4 3.6"><path d="M.6 .2v2.2h2.600M2.200 1.200l1.200 1.200-1.200 1.200" fill="none" stroke="#8a5cc0" stroke-width=".7"/></svg>
<div class="k" style="left:981.8px;top:50.80px;">替换</div>
<svg style="left:974.4px;top:62.4px" width="5" height="7.4" viewBox="0 0 5 7.4"><path d="M.5 .4v5.6l1.4-1.2 1 2.2 .9-.4-1-2.2 1.8-.1z" fill="#fff" stroke="#555" stroke-width=".6"/></svg>
<div class="k" style="left:981.8px;top:62.60px;">选择</div>
<svg style="left:997.30px;top:65.95px" width="3.8" height="2.1" viewBox="0 0 3.8 2.1"><path d="M0 0h3.8L1.9 2.1z" fill="#6e6e6e"/></svg>
<div class="k" style="left:982px;top:75.60px;font-size:6.5px;color:#444">编辑</div>
<svg style="left:1015.4px;top:79.4px" width="6" height="3.4" viewBox="0 0 6 3.4"><path d="M.3 3.1L3 .5l2.7 2.6" fill="none" stroke="#666" stroke-width=".7"/></svg>
</div>
<div id="web">
<div id="hdr">
<div style="position:absolute;left:160.8px;top:12.6px;width:48px;height:4.4px;background:#5c70ea;border-radius:0 0 4px 4px"></div>
<svg style="position:absolute;left:33.2px;top:26px;overflow:visible;" width="30.4" height="25.4" viewBox="0 0 30.4 25.4"><defs><linearGradient id="lg1" x1="0" y1="0" x2="1" y2="1"><stop offset="0" stop-color="#ffc53d"/><stop offset="1" stop-color="#ffa024"/></linearGradient></defs><path d="M9.4 .6h12.6c.8 0 1.4 .3 1.9 .9l5.8 7.2c.6 .8 .6 1.6-.1 2.4L16.7 24.4c-.9 .9-1.9 .9-2.8 0L.8 11.100c-.7-.8-.7-1.600-.1-2.400L6.900 1.500C7.500 .9 8.400 .6 9.400 .600z" fill="url(#lg1)"/><path d="M11.200 5.400h7.600l3.600 4.400-7.400 6.800-7.200-6.800z" fill="#ffe3bd"/><path d="M4.600 6.600L8 3.200" stroke="#fff4d8" stroke-width="1" stroke-linecap="round"/></svg>
<div style="position:absolute;left:63.6px;top:31.2px;font-size:13.2px;line-height:16px;font-weight:900;color:#222;white-space:nowrap;transform:skewX(-4deg) scaleY(.94);letter-spacing:-.05px">素材资源</div>
<svg style="position:absolute;left:168.7px;top:33.8px;overflow:visible;" width="9.8" height="9.8" viewBox="0 0 9.8 9.8"><path d="M4.900 .2L.1 4.400h9.600z" fill="#ffa62b"/><path d="M1.200 4.400h7.400v5.300H1.200z" fill="#2ea55c"/><rect x="3.700" y="6.200" width="2.400" height="3.500" fill="#fff"/></svg><div style="position:absolute;left:179.3px;top:32.7px;font-size:11.2px;line-height:15px;font-weight:bold;color:#1c1c1c;white-space:nowrap">首页</div>
<svg style="position:absolute;left:216.5px;top:33.599999999999994px;overflow:visible;" width="9" height="8.8" viewBox="0 0 9 8.8"><path d="M8.900 .05L.2 4.700l3.200 2.200z" fill="#2bb38a"/><path d="M8.900 .05L3.400 6.900l2.600 1.700z" fill="#f04848"/></svg><div style="position:absolute;left:226.4px;top:32.7px;font-size:11.2px;line-height:15px;font-weight:bold;color:#1c1c1c;white-space:nowrap">插件脚本</div><svg style="position:absolute;left:275.8px;top:37.8px;overflow:visible;" width="6" height="3.4" viewBox="0 0 6 3.4"><path d="M.3 .3L3 2.900 5.700 .3" fill="none" stroke="#484848" stroke-width=".95"/></svg>
<svg style="position:absolute;left:297.8px;top:34.8px;overflow:visible;" width="8.4" height="7.4" viewBox="0 0 8.4 7.4"><path d="M.2 .9c0-.4 .3-.7 .7-.7h2.400l.9 1h3.500c.4 0 .7 .3 .7 .7v4.800c0 .4-.3 .7-.7 .7H.9c-.4 0-.7-.3-.7-.7z" fill="#ffb347"/><rect x=".2" y="2.600" width="8.200" height="4.800" rx=".7" fill="#ffa733"/><rect x="1.400" y="3.400" width="2.400" height=".9" fill="#fff" opacity=".7"/></svg><div style="position:absolute;left:307.6px;top:32.7px;font-size:11.2px;line-height:15px;font-weight:bold;color:#1c1c1c;white-space:nowrap">模板合集</div><svg style="position:absolute;left:357.4px;top:37.8px;overflow:visible;" width="6" height="3.4" viewBox="0 0 6 3.4"><path d="M.3 .3L3 2.900 5.700 .3" fill="none" stroke="#484848" stroke-width=".95"/></svg>
<svg style="position:absolute;left:378.7px;top:34px;overflow:visible;" width="9" height="9" viewBox="0 0 9 9"><circle cx="4.500" cy="4.500" r="4.400" fill="#c8544a"/><circle cx="4.500" cy="4.500" r="4.400" fill="none" stroke="#e9b9a8" stroke-width=".6"/><path d="M4.500 .4v8.200M1.200 2.200c1.600 1.200 1.600 3.600 0 4.800M7.800 2.200c-1.600 1.200-1.600 3.600 0 4.800" fill="none" stroke="#f3d6c6" stroke-width=".6"/></svg><div style="position:absolute;left:388.9px;top:32.7px;font-size:11.2px;line-height:15px;font-weight:bold;color:#1c1c1c;white-space:nowrap">素材预设</div><svg style="position:absolute;left:438.7px;top:37.8px;overflow:visible;" width="6" height="3.4" viewBox="0 0 6 3.4"><path d="M.3 .3L3 2.900 5.700 .3" fill="none" stroke="#484848" stroke-width=".95"/></svg>
<svg style="position:absolute;left:460.7px;top:34.599999999999994px;overflow:visible;" width="8.2" height="8.2" viewBox="0 0 8.2 8.2"><rect x="0" y="0" width="3.800" height="3.800" fill="#f25022"/><rect x="4.400" y="0" width="3.800" height="3.800" fill="#7fba00"/><rect x="0" y="4.400" width="3.800" height="3.800" fill="#00a4ef"/><rect x="4.400" y="4.400" width="3.800" height="3.800" fill="#ffb900"/></svg><div style="position:absolute;left:470.1px;top:32.7px;font-size:11.2px;line-height:15px;font-weight:bold;color:#1c1c1c;white-space:nowrap">软件工具</div><svg style="position:absolute;left:519.9px;top:37.8px;overflow:visible;" width="6" height="3.4" viewBox="0 0 6 3.4"><path d="M.3 .3L3 2.900 5.700 .3" fill="none" stroke="#484848" stroke-width=".95"/></svg>
<svg style="position:absolute;left:541.2px;top:34px;overflow:visible;" width="10" height="10" viewBox="0 0 10 10"><path d="M8.500 6.900A3.250 3.250 0 1 1 8.800 5.150H3.200" fill="none" stroke="#1ebbee" stroke-width="2.100"/><path d="M9.300 1.400C8.300 -.1 5 .6 2.400 4 .4 6.700 -.2 9.300 1.600 9.800c.8 .2 1.800-.1 2.600-.6" fill="none" stroke="#1ebbee" stroke-width=".8"/></svg><div style="position:absolute;left:551.3px;top:32.7px;font-size:11.2px;line-height:15px;font-weight:bold;color:#1c1c1c;white-space:nowrap">网站收集</div>
<svg style="position:absolute;left:611.2px;top:33.8px;overflow:visible;" width="9.6" height="9.6" viewBox="0 0 9.6 9.6"><circle cx="4.800" cy="4.800" r="4.700" fill="#e1251b"/><path d="M4.800 2.200L2.400 7.200h1.300l1.100-2.500 .9 1.600H5l.4 .9h1.900z" fill="#fff"/></svg><div style="position:absolute;left:621.4px;top:32.7px;font-size:11.2px;line-height:15px;font-weight:bold;color:#1c1c1c;white-space:nowrap">教程合集</div>
<svg style="position:absolute;left:682px;top:34.599999999999994px;overflow:visible;" width="8.4" height="8.4" viewBox="0 0 8.4 8.4"><rect x=".5" y=".5" width="7.400" height="7.400" fill="#f4f1fc" stroke="#9f8fe0" stroke-width="1"/><path d="M3.800 2.600h1.400v3.200" fill="none" stroke="#c9c0ee" stroke-width=".6"/></svg><div style="position:absolute;left:691.1px;top:32.7px;font-size:11.2px;line-height:15px;font-weight:bold;color:#1c1c1c;white-space:nowrap">精选收录</div>
<svg style="position:absolute;left:782px;top:33.599999999999994px;overflow:visible;" width="10" height="11.4" viewBox="0 0 10 11.4"><circle cx="5" cy="4.300" r="3.700" fill="none" stroke="#666" stroke-width="1"/><path d="M3 7.600L2.400 10.800 5 9.600l2.600 1.200L7 7.600" fill="none" stroke="#666" stroke-width=".9"/><path d="M3.600 5.100c.8 .7 2 .7 2.800 0" fill="none" stroke="#666" stroke-width=".7"/></svg>
<div style="position:absolute;left:805.3px;top:32.8px;width:.8px;height:12.2px;background:#e2e2e2"></div>
<svg style="position:absolute;left:819.4px;top:33.8px;overflow:visible;" width="11.4" height="11" viewBox="0 0 11.4 11"><circle cx="5.300" cy="5.200" r="4.500" fill="none" stroke="#666" stroke-width="1"/><path d="M8.400 8.400l2.400 2.200" stroke="#666" stroke-width="1.100" stroke-linecap="round"/></svg>
<svg style="position:absolute;left:863.6px;top:33px;overflow:visible;" width="9.8" height="11" viewBox="0 0 9.8 11"><path d="M4.600 .5C3.400 3.800 5 7.600 9.200 8.600 7.800 10.400 4.600 10.900 2.400 9.200 -.4 7 -.2 2.400 4.600 .5z" fill="none" stroke="#4a4a68" stroke-width=".95"/><path d="M6.800 9.800c1-.2 1.800-.6 2.400-1.200" fill="none" stroke="#f0a060" stroke-width=".9"/></svg>
<div style="position:absolute;left:898px;top:30.0px;width:82px;height:23.5px;border-radius:12px;background:linear-gradient(100deg,#2c2c2c 0%,#3a3a3a 22%,#4c4c4c 40%,#2f2f2f 52%,#6a6a6a 64%,#3c3c3c 78%,#2e2e2e 100%)"></div>
<svg style="position:absolute;left:909px;top:35px;overflow:visible;" width="14" height="12" viewBox="0 0 14 12"><path d="M.4 3.400l3.300 3 3.300-5.900 3.300 5.900 3.300-3-1.300 8H1.700z" fill="#ff8a3c"/><circle cx="7" cy="1.300" r="1.200" fill="#ff8a3c"/><circle cx=".9" cy="3.300" r=".9" fill="#ff8a3c"/><circle cx="13.100" cy="3.300" r=".9" fill="#ff8a3c"/><rect x="4.400" y="8.200" width="5.200" height="1.200" rx=".6" fill="#7a3a10"/></svg>
<div style="position:absolute;left:924.8px;top:34.2px;font-size:11px;line-height:15px;color:#0c0c0c;white-space:nowrap">开通会员</div>
</div>
<div class="card" style="left:10px;top:42.0px"><div class="th" style="background:repeating-conic-gradient(from 0deg at 50% 55%,#fff 0deg 3deg,#e9e9e9 3deg 4.5deg,#fff 4.5deg 8deg,#f0f0f0 8deg 9deg)"><div style="position:absolute;left:0;top:0;width:96px;height:66px;background:radial-gradient(ellipse at 50% 55%,#fff 0 25%,rgba(255,255,255,0) 70%)"></div><div style="position:absolute;left:2.300px;top:8.200px;width:34.500px;height:64px;border-radius:4px;background:#f3f6fa;border:1px solid #3a3a3a;box-shadow:2px 0 3px rgba(0,0,0,.35)"></div><div style="position:absolute;left:7.600px;top:18.400px;width:24px;height:19px;border-radius:3px;background:linear-gradient(160deg,#8fa7bd 10%,#b7a9a0 50%,#e0a678 95%)"></div><div style="position:absolute;left:13.500px;top:22.500px;font-size:8px;line-height:9px;color:#fff;font-weight:bold">13</div><div style="position:absolute;left:12px;top:39px;width:15px;height:2px;background:#e5c7a6"></div><div style="position:absolute;left:5px;top:55px;width:29px;height:.8px;background:#dfe7f2"></div><div style="position:absolute;left:17.500px;top:9.600px;width:2px;height:1.600px;border-radius:50%;background:#222"></div><div style="position:absolute;left:6px;top:12.500px;width:6px;height:1px;background:#b9c3d3"></div><div style="position:absolute;left:28.500px;top:12px;width:2.400px;height:2px;background:#7a5cf0"></div><div style="position:absolute;left:32.500px;top:12px;width:2px;height:2px;background:#555"></div><div style="position:absolute;left:12px;top:32px;width:15px;height:1.200px;background:#f2e6d8;opacity:.9"></div><div style="position:absolute;left:15px;top:44.500px;width:9px;height:1.400px;background:#d8dde6"></div><div style="position:absolute;left:8.0px;top:50.500px;width:2.200px;height:2.200px;border-radius:50%;background:#f4a640"></div><div style="position:absolute;left:7.4px;top:54px;width:3.400px;height:.9px;background:#9aa3b3"></div><div style="position:absolute;left:15.2px;top:50.500px;width:2.200px;height:2.200px;border-radius:50%;background:#e8607a"></div><div style="position:absolute;left:14.600000000000001px;top:54px;width:3.400px;height:.9px;background:#9aa3b3"></div><div style="position:absolute;left:22.4px;top:50.500px;width:2.200px;height:2.200px;border-radius:50%;background:#6a9cf0"></div><div style="position:absolute;left:21.8px;top:54px;width:3.400px;height:.9px;background:#9aa3b3"></div><div style="position:absolute;left:29.6px;top:50.500px;width:2.200px;height:2.200px;border-radius:50%;background:#a070e8"></div><div style="position:absolute;left:29.0px;top:54px;width:3.400px;height:.9px;background:#9aa3b3"></div><div style="position:absolute;left:6px;top:58px;width:27px;height:8px;background:#e9f0f9"></div><div style="position:absolute;left:53px;top:8.900px;width:26.800px;height:27.200px;border-radius:6px;background:linear-gradient(50deg,#ea55c6 5%,#b044e6 50%,#6a3cf2 95%)"></div><div style="position:absolute;left:57.500px;top:14.500px;width:11px;height:11px;border-radius:50%;background:radial-gradient(circle at 40% 35%,#ffd84a,#f4a418)"></div><div style="position:absolute;left:59.500px;top:21.500px;width:17px;height:9px;border-radius:5px;background:linear-gradient(#fff,#dcdce6)"></div><div style="position:absolute;left:64px;top:17.500px;width:10px;height:10px;border-radius:50%;background:#fbfbff"></div><div style="position:absolute;left:45px;top:38.400px;width:47.500px;height:10px;background:#fff21a"></div><div style="font-weight:900;white-space:nowrap;position:absolute;left:46.600px;top:37.800px;font-size:8.9px;line-height:11px;color:#111">免费无广告</div><div style="font-weight:900;white-space:nowrap;position:absolute;left:38.600px;top:52.600px;font-size:8.700px;line-height:11px;color:#111;text-shadow:0 0 1px #fff,0 0 1px #fff">人人必备的<span style="font-weight:bold;font-size:9.4px">app</span></div></div><div class="ds">完全免费无广告限制，超准天气预测App，界面美观，信息及时，准确、<br>贴心的天气预报软件，纯良心产品~"超准天气预报"是一款颜值超高的<span class="el">…</span></div><div class="tags"><div class="vip">免费资源</div><svg style="position:absolute;left:59.5px;top:4.3px;overflow:visible;" width="11.5" height="9" viewBox="0 0 11.5 9"><path d="M.5 8.200V1.300c0-.4 .3-.7 .7-.7h2.500l1.200 1.300h3.600c.4 0 .7 .3 .7 .7v1M.5 8.200l1.700-4.300h8.600L9.100 8.200z" fill="none" stroke="#333" stroke-width="1.05" stroke-linejoin="round"/></svg><div style="position:absolute;left:74.5px;top:0">手机软件</div><svg style="position:absolute;left:130.3px;top:4.3px;overflow:visible;" width="11.5" height="9" viewBox="0 0 11.5 9"><path d="M.5 8.200V1.300c0-.4 .3-.7 .7-.7h2.500l1.200 1.300h3.600c.4 0 .7 .3 .7 .7v1M.5 8.200l1.700-4.300h8.600L9.100 8.200z" fill="none" stroke="#333" stroke-width="1.05" stroke-linejoin="round"/></svg><div style="position:absolute;left:145.3px;top:0">软件工具</div></div><div class="meta"><div style="position:absolute;left:.1px;top:-.7px;width:14.300px;height:14.600px;border-radius:50%;background:linear-gradient(160deg,#d4ecd8 0%,#e3eef6 45%,#dfe8f4 100%);overflow:hidden"><div style="position:absolute;left:4.700px;top:.8px;width:5.200px;height:4.800px;border-radius:50%;background:#1c1c1e"></div><div style="position:absolute;left:5.800px;top:4.200px;width:3px;height:2.600px;border-radius:40%;background:#6e5446"></div><div style="position:absolute;left:3.600px;top:6.200px;width:7.200px;height:6.500px;border-radius:2.500px 2.500px 1px 1px;background:linear-gradient(#bdbdbd,#a9acb0)"></div><div style="position:absolute;left:6.600px;top:9.500px;width:2.600px;height:3px;background:#5a7fa8"></div><div style="position:absolute;left:2.600px;top:11.300px;width:7.500px;height:3.400px;border-radius:1.500px;background:#d5822c"></div></div><div style="position:absolute;left:8.400px;top:6.300px;width:7px;height:7px;border-radius:50%;background:radial-gradient(circle,#6f55dc 0 30%,#a997ec 62%,#cfc5f4 100%)"></div><div style="position:absolute;left:19.400px;top:0">qinxi</div><div style="position:absolute;left:46.900px;top:4.100px;width:6.200px;height:6.200px;border-radius:50%;border:1.200px solid #869ff0"></div><div style="position:absolute;left:58.300px;top:0">1小时前</div></div><div class="st" style="right:15.200px;display:flex;align-items:center"><svg width="10.200" height="9.800" viewBox="0 0 10.200 9.800" style="position:static;margin-right:1.500px;margin-top:.4px"><path d="M.9 .5h8.400c.4 0 .7 .3 .7 .7v5.600c0 .4-.3 .7-.7 .7H4.200L2 9.400V7.500H.9c-.4 0-.7-.3-.7-.7V1.200C.2 .8 .5 .5 .9 .5z" fill="none" stroke="#333" stroke-width="1.05"/><circle cx="2.900" cy="4" r=".65" fill="#444"/><circle cx="5.100" cy="4" r=".65" fill="#444"/><circle cx="7.300" cy="4" r=".65" fill="#444"/></svg><span style="display:inline-block;width:5.1px;height:14px;overflow:visible"><span style="display:inline-block;font-size:10.9px;line-height:14px;transform:scaleX(.84);transform-origin:0 50%;color:#3a3a3a">0</span></span><svg width="9.800" height="7" viewBox="0 0 10 7" style="position:static;margin-left:6.600px;margin-right:1.900px;margin-top:.6px"><path d="M.3 3.500C1.500 1.500 3.100 .5 5 .5s3.500 1 4.700 3C8.500 5.500 6.900 6.500 5 6.500S1.500 5.500 .3 3.500z" fill="none" stroke="#444" stroke-width=".8"/><circle cx="5" cy="3.500" r="1.500" fill="none" stroke="#444" stroke-width=".8"/></svg><span style="display:inline-block;width:15.3px;height:14px;overflow:visible"><span style="display:inline-block;font-size:10.9px;line-height:14px;transform:scaleX(.84);transform-origin:0 50%;color:#3a3a3a">365</span></span><svg width="8.600" height="9.200" viewBox="0 0 9 9.400" style="position:static;margin-left:6.500px;margin-right:2.500px;margin-top:-.2px"><path d="M.5 4.200h1.900v4.700H.5zM2.400 4.400l2-3.700c.8 0 1.300 .5 1.200 1.400L5.300 3.700h2.300c.7 0 1.100 .5 1 1.200l-.6 3.100c-.1 .6-.5 .9-1.100 .9H2.400" fill="none" stroke="#444" stroke-width=".8" stroke-linejoin="round"/></svg><span style="display:inline-block;width:10.2px;height:14px;overflow:visible"><span style="display:inline-block;font-size:10.9px;line-height:14px;transform:scaleX(.84);transform-origin:0 50%;color:#3a3a3a">10</span></span></div></div>
<div class="card" style="left:512.7px;top:42.0px"><div class="th" style="background:#000"><div style="font-weight:900;white-space:nowrap;position:absolute;left:1.300px;top:7.600px;font-size:10.900px;line-height:15px;color:#fff">下载速度</div><div style="font-weight:900;white-space:nowrap;position:absolute;left:45.200px;top:5.600px;font-size:14px;line-height:16px;color:#ff1a30;font-weight:bold;transform:scaleX(1.26);transform-origin:0 0">50</div><div style="font-weight:900;white-space:nowrap;position:absolute;left:65px;top:8.400px;font-size:10.600px;line-height:14px;color:#f2f200;font-weight:bold;transform:scaleX(1.3);transform-origin:0 0">M/s<span style="color:#fff">!</span></div><div style="font-weight:900;white-space:nowrap;position:absolute;left:.8px;top:24.400px;font-size:9.200px;line-height:12px;color:#c6ee00">高颜值下载器</div><div style="position:absolute;left:0;top:34.300px;width:59.600px;height:1.800px;background:#f01020"></div><div style="font-weight:900;white-space:nowrap;position:absolute;left:.8px;top:41.800px;font-size:9.200px;line-height:12px;color:#fff">开源免费工具</div><div style="position:absolute;left:0;top:52.200px;width:59.600px;height:1.800px;background:#f01020"></div><div style="position:absolute;left:61.200px;top:24.300px;width:32px;height:31.500px;border-radius:6px;background:#2b2a36"></div><svg style="position:absolute;left:64.2px;top:27.3px;overflow:visible;" width="26" height="26" viewBox="0 0 26 26"><defs><linearGradient id="dl1" x1="0" y1="0" x2="1" y2="0"><stop offset="0" stop-color="#39c6f0"/><stop offset=".55" stop-color="#7a6cf5"/><stop offset="1" stop-color="#d94df0"/></linearGradient></defs><path d="M2 12.500h5.200a5.800 5.800 0 0 0 11.600 0H24a11 11 0 0 1-22 0z" fill="url(#dl1)"/><path d="M11.400 2.600h3.200v8.200h2.800L13 15.400 8.600 10.800h2.800z" fill="#8a63f2"/><path d="M5 8.500l-1.400-1M21 8.500l1.400-1M7.800 5l-.8-1.400M18.200 5l.8-1.400" stroke="#5a6ad8" stroke-width="1.100"/></svg></div><div class="ds">4.2k star！下载更快，速度轻松提升10倍！免费开源的下载神器来袭，<br>AB Download Manager 全新下载体验AB Download Manager是一款免<span class="el">…</span></div><div class="tags"><div class="vip">免费资源</div><svg style="position:absolute;left:59.5px;top:4.3px;overflow:visible;" width="11.5" height="9" viewBox="0 0 11.5 9"><path d="M.5 8.200V1.300c0-.4 .3-.7 .7-.7h2.500l1.200 1.300h3.600c.4 0 .7 .3 .7 .7v1M.5 8.200l1.700-4.300h8.600L9.100 8.200z" fill="none" stroke="#333" stroke-width="1.05" stroke-linejoin="round"/></svg><div style="position:absolute;left:74.5px;top:0">电脑软件</div><svg style="position:absolute;left:130.3px;top:4.3px;overflow:visible;" width="11.5" height="9" viewBox="0 0 11.5 9"><path d="M.5 8.200V1.300c0-.4 .3-.7 .7-.7h2.500l1.200 1.300h3.600c.4 0 .7 .3 .7 .7v1M.5 8.200l1.700-4.300h8.600L9.100 8.200z" fill="none" stroke="#333" stroke-width="1.05" stroke-linejoin="round"/></svg><div style="position:absolute;left:145.3px;top:0">软件工具</div></div><div class="meta"><div style="position:absolute;left:.1px;top:-.7px;width:14.300px;height:14.600px;border-radius:50%;background:linear-gradient(160deg,#d4ecd8 0%,#e3eef6 45%,#dfe8f4 100%);overflow:hidden"><div style="position:absolute;left:4.700px;top:.8px;width:5.200px;height:4.800px;border-radius:50%;background:#1c1c1e"></div><div style="position:absolute;left:5.800px;top:4.200px;width:3px;height:2.600px;border-radius:40%;background:#6e5446"></div><div style="position:absolute;left:3.600px;top:6.200px;width:7.200px;height:6.500px;border-radius:2.500px 2.500px 1px 1px;background:linear-gradient(#bdbdbd,#a9acb0)"></div><div style="position:absolute;left:6.600px;top:9.500px;width:2.600px;height:3px;background:#5a7fa8"></div><div style="position:absolute;left:2.600px;top:11.300px;width:7.500px;height:3.400px;border-radius:1.500px;background:#d5822c"></div></div><div style="position:absolute;left:8.400px;top:6.300px;width:7px;height:7px;border-radius:50%;background:radial-gradient(circle,#6f55dc 0 30%,#a997ec 62%,#cfc5f4 100%)"></div><div style="position:absolute;left:19.400px;top:0">qinxi</div><div style="position:absolute;left:46.900px;top:4.100px;width:6.200px;height:6.200px;border-radius:50%;border:1.200px solid #869ff0"></div><div style="position:absolute;left:58.300px;top:0">昨天</div></div><div class="st" style="right:15.200px;display:flex;align-items:center"><svg width="10.200" height="9.800" viewBox="0 0 10.200 9.800" style="position:static;margin-right:1.500px;margin-top:.4px"><path d="M.9 .5h8.400c.4 0 .7 .3 .7 .7v5.600c0 .4-.3 .7-.7 .7H4.200L2 9.400V7.500H.9c-.4 0-.7-.3-.7-.7V1.200C.2 .8 .5 .5 .9 .5z" fill="none" stroke="#333" stroke-width="1.05"/><circle cx="2.900" cy="4" r=".65" fill="#444"/><circle cx="5.100" cy="4" r=".65" fill="#444"/><circle cx="7.300" cy="4" r=".65" fill="#444"/></svg><span style="display:inline-block;width:5.1px;height:14px;overflow:visible"><span style="display:inline-block;font-size:10.9px;line-height:14px;transform:scaleX(.84);transform-origin:0 50%;color:#3a3a3a">0</span></span><svg width="9.800" height="7" viewBox="0 0 10 7" style="position:static;margin-left:6.600px;margin-right:1.900px;margin-top:.6px"><path d="M.3 3.500C1.500 1.500 3.100 .5 5 .5s3.500 1 4.700 3C8.500 5.500 6.900 6.500 5 6.500S1.500 5.500 .3 3.500z" fill="none" stroke="#444" stroke-width=".8"/><circle cx="5" cy="3.500" r="1.500" fill="none" stroke="#444" stroke-width=".8"/></svg><span style="display:inline-block;width:15.3px;height:14px;overflow:visible"><span style="display:inline-block;font-size:10.9px;line-height:14px;transform:scaleX(.84);transform-origin:0 50%;color:#3a3a3a">582</span></span><svg width="8.600" height="9.200" viewBox="0 0 9 9.400" style="position:static;margin-left:6.500px;margin-right:2.500px;margin-top:-.2px"><path d="M.5 4.200h1.900v4.700H.5zM2.400 4.400l2-3.700c.8 0 1.300 .5 1.200 1.400L5.300 3.700h2.300c.7 0 1.100 .5 1 1.200l-.6 3.100c-.1 .6-.5 .9-1.100 .9H2.400" fill="none" stroke="#444" stroke-width=".8" stroke-linejoin="round"/></svg><span style="display:inline-block;width:10.2px;height:14px;overflow:visible"><span style="display:inline-block;font-size:10.9px;line-height:14px;transform:scaleX(.84);transform-origin:0 50%;color:#3a3a3a">14</span></span></div></div>
<div class="card" style="left:10px;top:178.4px"><div class="ttl">发现神仙App，居家做饭菜谱软件！完全免费无广告，内置海量丰富的菜谱信息，我真的爱<span class="el">…</span></div><div class="th" style="background:repeating-conic-gradient(from 0deg at 50% 55%,#fff 0deg 3deg,#e9e9e9 3deg 4.5deg,#fff 4.5deg 8deg,#f0f0f0 8deg 9deg)"><div style="position:absolute;left:0;top:0;width:96px;height:66px;background:radial-gradient(ellipse at 55% 55%,#fff 0 25%,rgba(255,255,255,0) 70%)"></div><div style="position:absolute;left:-3px;top:10px;width:39px;height:60px;border-radius:4px;background:#fff;border:1px solid #222;border-right-width:1.600px;box-shadow:2px 0 3px rgba(0,0,0,.35);overflow:hidden"><div style="position:absolute;left:0;top:0;width:40px;height:8.500px;background:#f6a21c"></div><div style="position:absolute;left:5px;top:4.800px;width:30px;height:2px;background:#fff3d6;border-radius:1px"></div><div style="position:absolute;left:3.5px;top:10.0px;width:16px;height:8.800px;background:#fdebd6"></div><div style="position:absolute;left:11px;top:13.0px;width:8px;height:5.500px;border-radius:50%;background:radial-gradient(#e58a2a,#6e8a32)"></div><div style="position:absolute;left:20.5px;top:10.0px;width:16px;height:8.800px;background:#fbe3df"></div><div style="position:absolute;left:28px;top:13.0px;width:8px;height:5.500px;border-radius:50%;background:radial-gradient(#e58a2a,#6e8a32)"></div><div style="position:absolute;left:3.5px;top:19.6px;width:16px;height:8.800px;background:#dcebf7"></div><div style="position:absolute;left:11px;top:22.6px;width:8px;height:5.500px;border-radius:50%;background:radial-gradient(#e58a2a,#6e8a32)"></div><div style="position:absolute;left:20.5px;top:19.6px;width:16px;height:8.800px;background:#fdeed8"></div><div style="position:absolute;left:28px;top:22.6px;width:8px;height:5.500px;border-radius:50%;background:radial-gradient(#e58a2a,#6e8a32)"></div><div style="position:absolute;left:3.5px;top:31.0px;width:16px;height:12.500px;background:radial-gradient(circle,#7a6a3a 0 25%,#3d5a36 45%,#9cb6c8 75%,#e8e8e8)"></div><div style="position:absolute;left:20.5px;top:31.0px;width:16px;height:12.500px;background:radial-gradient(circle,#8a3a24 0 30%,#3a4a3a 55%,#c8b8a8 80%,#a05030)"></div><div style="position:absolute;left:3.5px;top:45.5px;width:16px;height:12.500px;background:radial-gradient(circle,#3f7a2a 0 35%,#1a2a1a 60%,#f1e6c8 85%)"></div><div style="position:absolute;left:20.5px;top:45.5px;width:16px;height:12.500px;background:radial-gradient(circle,#c0703a 0 30%,#6a3a1a 55%,#e8e0d0 80%,#4a5a2a)"></div></div><div style="position:absolute;left:52.600px;top:11.400px;width:22.200px;height:22.200px;border-radius:3px;background:#e9472f"></div><div style="position:absolute;left:55.200px;top:17.800px;width:17px;height:11px;border-radius:50%;background:#fff"></div><div style="position:absolute;left:56.400px;top:16.800px;width:14.500px;height:9.500px;border-radius:50%;background:radial-gradient(ellipse,#f6c244 20%,#d9822b 70%,#b4521c)"></div><div style="font-weight:900;white-space:nowrap;position:absolute;left:38.400px;top:36.800px;font-size:11.300px;line-height:14px;color:#111;text-shadow:0 0 1px #fff">居家必备的</div><div style="font-weight:900;white-space:nowrap;position:absolute;left:43.500px;top:50.400px;font-size:11.300px;line-height:14px;color:#111;text-shadow:0 0 1px #fff">烹饪<span style="font-weight:bold;font-size:12px">App</span></div></div><div class="ds">发现神仙App，居家做饭菜谱软件！完全免费无广告，内置海量丰富的菜<br>谱信息，我真的爱死它了~佳肴菜谱是一个烹饪辅助工具，它提供了丰<span class="el">…</span></div><div class="tags"><div class="vip">免费资源</div><svg style="position:absolute;left:59.5px;top:4.3px;overflow:visible;" width="11.5" height="9" viewBox="0 0 11.5 9"><path d="M.5 8.200V1.300c0-.4 .3-.7 .7-.7h2.500l1.200 1.300h3.600c.4 0 .7 .3 .7 .7v1M.5 8.200l1.700-4.300h8.600L9.100 8.200z" fill="none" stroke="#333" stroke-width="1.05" stroke-linejoin="round"/></svg><div style="position:absolute;left:74.5px;top:0">手机软件</div><svg style="position:absolute;left:130.3px;top:4.3px;overflow:visible;" width="11.5" height="9" viewBox="0 0 11.5 9"><path d="M.5 8.200V1.300c0-.4 .3-.7 .7-.7h2.500l1.200 1.300h3.600c.4 0 .7 .3 .7 .7v1M.5 8.200l1.700-4.300h8.600L9.100 8.200z" fill="none" stroke="#333" stroke-width="1.05" stroke-linejoin="round"/></svg><div style="position:absolute;left:145.3px;top:0">软件工具</div></div><div class="meta"><div style="position:absolute;left:.1px;top:-.7px;width:14.300px;height:14.600px;border-radius:50%;background:linear-gradient(160deg,#d4ecd8 0%,#e3eef6 45%,#dfe8f4 100%);overflow:hidden"><div style="position:absolute;left:4.700px;top:.8px;width:5.200px;height:4.800px;border-radius:50%;background:#1c1c1e"></div><div style="position:absolute;left:5.800px;top:4.200px;width:3px;height:2.600px;border-radius:40%;background:#6e5446"></div><div style="position:absolute;left:3.600px;top:6.200px;width:7.200px;height:6.500px;border-radius:2.500px 2.500px 1px 1px;background:linear-gradient(#bdbdbd,#a9acb0)"></div><div style="position:absolute;left:6.600px;top:9.500px;width:2.600px;height:3px;background:#5a7fa8"></div><div style="position:absolute;left:2.600px;top:11.300px;width:7.500px;height:3.400px;border-radius:1.500px;background:#d5822c"></div></div><div style="position:absolute;left:8.400px;top:6.300px;width:7px;height:7px;border-radius:50%;background:radial-gradient(circle,#6f55dc 0 30%,#a997ec 62%,#cfc5f4 100%)"></div><div style="position:absolute;left:19.400px;top:0">qinxi</div><div style="position:absolute;left:46.900px;top:4.100px;width:6.200px;height:6.200px;border-radius:50%;border:1.200px solid #869ff0"></div><div style="position:absolute;left:58.300px;top:0">前天</div></div><div class="st" style="right:15.200px;display:flex;align-items:center"><svg width="10.200" height="9.800" viewBox="0 0 10.200 9.800" style="position:static;margin-right:1.500px;margin-top:.4px"><path d="M.9 .5h8.400c.4 0 .7 .3 .7 .7v5.600c0 .4-.3 .7-.7 .7H4.200L2 9.400V7.500H.9c-.4 0-.7-.3-.7-.7V1.200C.2 .8 .5 .5 .9 .5z" fill="none" stroke="#333" stroke-width="1.05"/><circle cx="2.900" cy="4" r=".65" fill="#444"/><circle cx="5.100" cy="4" r=".65" fill="#444"/><circle cx="7.300" cy="4" r=".65" fill="#444"/></svg><span style="display:inline-block;width:5.1px;height:14px;overflow:visible"><span style="display:inline-block;font-size:10.9px;line-height:14px;transform:scaleX(.84);transform-origin:0 50%;color:#3a3a3a">0</span></span><svg width="9.800" height="7" viewBox="0 0 10 7" style="position:static;margin-left:6.600px;margin-right:1.900px;margin-top:.6px"><path d="M.3 3.500C1.500 1.500 3.100 .5 5 .5s3.500 1 4.700 3C8.500 5.500 6.900 6.500 5 6.500S1.500 5.500 .3 3.500z" fill="none" stroke="#444" stroke-width=".8"/><circle cx="5" cy="3.500" r="1.500" fill="none" stroke="#444" stroke-width=".8"/></svg><span style="display:inline-block;width:15.3px;height:14px;overflow:visible"><span style="display:inline-block;font-size:10.9px;line-height:14px;transform:scaleX(.84);transform-origin:0 50%;color:#3a3a3a">651</span></span><svg width="8.600" height="9.200" viewBox="0 0 9 9.400" style="position:static;margin-left:6.500px;margin-right:2.500px;margin-top:-.2px"><path d="M.5 4.200h1.900v4.700H.5zM2.400 4.400l2-3.700c.8 0 1.300 .5 1.200 1.400L5.300 3.700h2.300c.7 0 1.100 .5 1 1.200l-.6 3.100c-.1 .6-.5 .9-1.100 .9H2.400" fill="none" stroke="#444" stroke-width=".8" stroke-linejoin="round"/></svg><span style="display:inline-block;width:10.2px;height:14px;overflow:visible"><span style="display:inline-block;font-size:10.9px;line-height:14px;transform:scaleX(.84);transform-origin:0 50%;color:#3a3a3a">15</span></span></div></div>
<div class="card" style="left:512.7px;top:178.4px"><div class="ttl">强大的PDF文档转换工具！办公一族必备，永久免费使用，PDF转word工具，文档格式转换<span class="el">…</span></div><div class="th" style="background:#000"><div style="font-weight:900;white-space:nowrap;position:absolute;left:-.6px;top:4.600px;font-size:10.500px;line-height:14px;color:#fff;letter-spacing:.1px">办公文档转换神器<span style="font-weight:bold">!</span></div><div style="position:absolute;left:1.300px;top:22.400px;width:62px;height:36.800px;background:#b4b4b4;overflow:hidden"><div style="position:absolute;left:0;top:0;width:62px;height:8.500px;background:linear-gradient(#dbe6f4,#c3d3ea)"></div><div style="position:absolute;left:0;top:8.500px;width:62px;height:2.500px;background:#e8eef6"></div><div style="position:absolute;left:25px;top:3px;width:7px;height:5px;background:#f3d27a"></div><div style="position:absolute;left:0;top:11px;width:13px;height:26px;background:#f2f2f2"></div><div style="position:absolute;left:25px;top:13px;width:25px;height:24px;background:#fdfdfd"></div><div style="position:absolute;left:50px;top:11px;width:12px;height:26px;background:#e6e6e6"></div></div><div style="position:absolute;left:5px;top:34.500px;width:9.800px;height:14px;background:#2b7cd3;color:#fff;font-size:7.500px;line-height:14px;text-align:center;font-weight:bold">W</div><div style="position:absolute;left:14.800px;top:35.500px;width:7.400px;height:12px;background:repeating-linear-gradient(#fff 0 1.200px,#5b9be0 1.200px 2.400px)"></div><div style="position:absolute;left:23.400px;top:34.500px;width:9.800px;height:14px;background:#dd4b25;color:#fff;font-size:7.500px;line-height:14px;text-align:center;font-weight:bold">P</div><div style="position:absolute;left:33.200px;top:35.500px;width:6.200px;height:12px;background:#f07a5c"></div><div style="position:absolute;left:34.400px;top:38px;width:3.600px;height:4px;background:#fbe1d8"></div><div style="position:absolute;left:40.600px;top:34.500px;width:9px;height:14px;background:#1fa463;color:#fff;font-size:7.500px;line-height:14px;text-align:center;font-weight:bold">X</div><div style="position:absolute;left:49.600px;top:35.500px;width:4.400px;height:12px;background:repeating-linear-gradient(#fff 0 1.200px,#c8c8c8 1.200px 2.400px)"></div><div style="position:absolute;left:65.900px;top:21.800px;width:22.800px;height:22.800px;border-radius:50%;background:#f20f14"></div><div style="font-weight:900;white-space:nowrap;position:absolute;left:68.300px;top:26.600px;font-size:9px;line-height:13px;color:#fff">免费</div><div style="font-weight:900;white-space:nowrap;position:absolute;left:55.600px;top:46px;font-size:7.600px;line-height:10px;color:#f2d400;text-shadow:0 0 1px #4a3a00,0 0 1.5px #000">永久使用版<span style="font-weight:bold">!</span></div></div><div class="ds">强大的PDF文档转换工具！办公一族必备，永久免费使用，PDF转word<br>工具，文档格式转换软件，支持win系统在日常工作和学习中，PDF是<span class="el">…</span></div><div class="tags"><div class="vip">免费资源</div><svg style="position:absolute;left:59.5px;top:4.3px;overflow:visible;" width="11.5" height="9" viewBox="0 0 11.5 9"><path d="M.5 8.200V1.300c0-.4 .3-.7 .7-.7h2.500l1.200 1.300h3.600c.4 0 .7 .3 .7 .7v1M.5 8.200l1.700-4.300h8.600L9.100 8.200z" fill="none" stroke="#333" stroke-width="1.05" stroke-linejoin="round"/></svg><div style="position:absolute;left:74.5px;top:0">电脑软件</div><svg style="position:absolute;left:130.3px;top:4.3px;overflow:visible;" width="11.5" height="9" viewBox="0 0 11.5 9"><path d="M.5 8.200V1.300c0-.4 .3-.7 .7-.7h2.500l1.200 1.300h3.600c.4 0 .7 .3 .7 .7v1M.5 8.200l1.700-4.300h8.600L9.100 8.200z" fill="none" stroke="#333" stroke-width="1.05" stroke-linejoin="round"/></svg><div style="position:absolute;left:145.3px;top:0">软件工具</div></div><div class="meta"><div style="position:absolute;left:.1px;top:-.7px;width:14.300px;height:14.600px;border-radius:50%;background:linear-gradient(160deg,#d4ecd8 0%,#e3eef6 45%,#dfe8f4 100%);overflow:hidden"><div style="position:absolute;left:4.700px;top:.8px;width:5.200px;height:4.800px;border-radius:50%;background:#1c1c1e"></div><div style="position:absolute;left:5.800px;top:4.200px;width:3px;height:2.600px;border-radius:40%;background:#6e5446"></div><div style="position:absolute;left:3.600px;top:6.200px;width:7.200px;height:6.500px;border-radius:2.500px 2.500px 1px 1px;background:linear-gradient(#bdbdbd,#a9acb0)"></div><div style="position:absolute;left:6.600px;top:9.500px;width:2.600px;height:3px;background:#5a7fa8"></div><div style="position:absolute;left:2.600px;top:11.300px;width:7.500px;height:3.400px;border-radius:1.500px;background:#d5822c"></div></div><div style="position:absolute;left:8.400px;top:6.300px;width:7px;height:7px;border-radius:50%;background:radial-gradient(circle,#6f55dc 0 30%,#a997ec 62%,#cfc5f4 100%)"></div><div style="position:absolute;left:19.400px;top:0">qinxi</div><div style="position:absolute;left:46.900px;top:4.100px;width:6.200px;height:6.200px;border-radius:50%;border:1.200px solid #869ff0"></div><div style="position:absolute;left:58.300px;top:0">前天</div></div><div class="st" style="right:15.200px;display:flex;align-items:center"><svg width="10.200" height="9.800" viewBox="0 0 10.200 9.800" style="position:static;margin-right:1.500px;margin-top:.4px"><path d="M.9 .5h8.400c.4 0 .7 .3 .7 .7v5.600c0 .4-.3 .7-.7 .7H4.200L2 9.400V7.500H.9c-.4 0-.7-.3-.7-.7V1.200C.2 .8 .5 .5 .9 .5z" fill="none" stroke="#333" stroke-width="1.05"/><circle cx="2.900" cy="4" r=".65" fill="#444"/><circle cx="5.100" cy="4" r=".65" fill="#444"/><circle cx="7.300" cy="4" r=".65" fill="#444"/></svg><span style="display:inline-block;width:5.1px;height:14px;overflow:visible"><span style="display:inline-block;font-size:10.9px;line-height:14px;transform:scaleX(.84);transform-origin:0 50%;color:#3a3a3a">0</span></span><svg width="9.800" height="7" viewBox="0 0 10 7" style="position:static;margin-left:6.600px;margin-right:1.900px;margin-top:.6px"><path d="M.3 3.500C1.500 1.500 3.100 .5 5 .5s3.500 1 4.700 3C8.500 5.500 6.900 6.500 5 6.500S1.500 5.500 .3 3.500z" fill="none" stroke="#444" stroke-width=".8"/><circle cx="5" cy="3.500" r="1.500" fill="none" stroke="#444" stroke-width=".8"/></svg><span style="display:inline-block;width:15.3px;height:14px;overflow:visible"><span style="display:inline-block;font-size:10.9px;line-height:14px;transform:scaleX(.84);transform-origin:0 50%;color:#3a3a3a">668</span></span><svg width="8.600" height="9.200" viewBox="0 0 9 9.400" style="position:static;margin-left:6.500px;margin-right:2.500px;margin-top:-.2px"><path d="M.5 4.200h1.900v4.700H.5zM2.400 4.400l2-3.700c.8 0 1.300 .5 1.200 1.400L5.300 3.700h2.300c.7 0 1.100 .5 1 1.200l-.6 3.100c-.1 .6-.5 .9-1.100 .9H2.400" fill="none" stroke="#444" stroke-width=".8" stroke-linejoin="round"/></svg><span style="display:inline-block;width:5.1px;height:14px;overflow:visible"><span style="display:inline-block;font-size:10.9px;line-height:14px;transform:scaleX(.84);transform-origin:0 50%;color:#3a3a3a">5</span></span></div></div>
<div class="card" style="left:10px;top:314.2px"><div class="ttl">无需GPU！本地Ai离线换脸工具，轻量版一键AI换脸、发型、穿搭工具，支持win和mac系统<span class="el">…</span></div><div class="th" style="background:#000"><div style="position:absolute;left:22.0px;top:1.500px;width:14px;height:15.500px;border-radius:48% 48% 45% 45%;background:radial-gradient(circle at 50% 45%,#f3cdb0 0 55%,#d9a888 100%)"></div><div style="position:absolute;left:25.5px;top:8px;width:1.600px;height:1.400px;border-radius:50%;background:#4a5a6a"></div><div style="position:absolute;left:30.0px;top:8px;width:1.600px;height:1.400px;border-radius:50%;background:#4a5a6a"></div><div style="position:absolute;left:27.8px;top:12px;width:2.200px;height:1.600px;border-radius:50%;background:#b8504a"></div><div style="position:absolute;left:19.5px;top:16.500px;width:21.500px;height:17px;border-radius:6px 6px 3px 3px;background:radial-gradient(circle at 50% 70%,#b99a1a 0 22%,#f2cf08 45%)"></div><div style="position:absolute;left:18.5px;top:22px;width:4px;height:11px;border-radius:2px;background:#e8bfa0"></div><div style="position:absolute;left:38.0px;top:22px;width:4px;height:11px;border-radius:2px;background:#e8bfa0"></div><div style="position:absolute;left:14.0px;top:42.600px;width:9px;height:5px;border-radius:2px;background:linear-gradient(90deg,#ddd,#888)"></div><div style="position:absolute;left:35.5px;top:42.600px;width:9px;height:5px;border-radius:2px;background:linear-gradient(90deg,#888,#ddd)"></div><div style="position:absolute;left:23.0px;top:44.500px;width:12.500px;height:2.500px;background:#3a3a3a"></div><div style="position:absolute;left:63.5px;top:1.500px;width:14px;height:15.500px;border-radius:48% 48% 45% 45%;background:radial-gradient(circle at 50% 45%,#f3cdb0 0 55%,#d9a888 100%)"></div><div style="position:absolute;left:67px;top:8px;width:1.600px;height:1.400px;border-radius:50%;background:#4a5a6a"></div><div style="position:absolute;left:71.5px;top:8px;width:1.600px;height:1.400px;border-radius:50%;background:#4a5a6a"></div><div style="position:absolute;left:69.3px;top:12px;width:2.200px;height:1.600px;border-radius:50%;background:#b8504a"></div><div style="position:absolute;left:61px;top:16.500px;width:21.500px;height:17px;border-radius:6px 6px 3px 3px;background:radial-gradient(circle at 50% 70%,#b99a1a 0 22%,#f2cf08 45%)"></div><div style="position:absolute;left:60px;top:22px;width:4px;height:11px;border-radius:2px;background:#e8bfa0"></div><div style="position:absolute;left:79.5px;top:22px;width:4px;height:11px;border-radius:2px;background:#e8bfa0"></div><div style="position:absolute;left:55.5px;top:42.600px;width:9px;height:5px;border-radius:2px;background:linear-gradient(90deg,#ddd,#888)"></div><div style="position:absolute;left:77px;top:42.600px;width:9px;height:5px;border-radius:2px;background:linear-gradient(90deg,#888,#ddd)"></div><div style="position:absolute;left:64.5px;top:44.500px;width:12.500px;height:2.500px;background:#3a3a3a"></div><svg style="position:absolute;left:42.5px;top:18.6px;overflow:visible;" width="13.5" height="9" viewBox="0 0 13.5 9"><path d="M.5 2.800h12M9.600 .4l3 2.400" fill="none" stroke="#e0207a" stroke-width="1.700"/><path d="M13 6.200H1M3.900 8.600L.9 6.200" fill="none" stroke="#e0207a" stroke-width="1.700"/></svg><div style="font-weight:900;white-space:nowrap;position:absolute;left:6.600px;top:31.400px;font-size:11.500px;line-height:15px;color:#00e8e6;text-shadow:0 0 1px #007a7a"><span style="font-weight:bold;font-size:12px">Ai</span>离线换脸工具</div><div style="font-weight:900;white-space:nowrap;position:absolute;left:-5.600px;top:47.400px;font-size:10.800px;line-height:15px;color:#ffff00"><span style="color:#ff0a8c">免<span style="font-weight:bold;font-size:11.800px;letter-spacing:.2px">GPU</span></span>全网最轻量版</div></div><div class="ds">无需GPU！本地Ai离线换脸工具，轻量版一键AI换脸、发型、穿搭工<br>具，支持win和mac系统，MagicMirrorMagicMirror是一个一键AI换脸、<span class="el">…</span></div><div class="tags"><div class="vip">免费资源</div><svg style="position:absolute;left:59.5px;top:4.3px;overflow:visible;" width="11.5" height="9" viewBox="0 0 11.5 9"><path d="M.5 8.200V1.300c0-.4 .3-.7 .7-.7h2.500l1.200 1.300h3.600c.4 0 .7 .3 .7 .7v1M.5 8.200l1.700-4.300h8.600L9.100 8.200z" fill="none" stroke="#333" stroke-width="1.05" stroke-linejoin="round"/></svg><div style="position:absolute;left:74.5px;top:0">Ai效率</div><svg style="position:absolute;left:117.9px;top:4.3px;overflow:visible;" width="11.5" height="9" viewBox="0 0 11.5 9"><path d="M.5 8.200V1.300c0-.4 .3-.7 .7-.7h2.500l1.200 1.300h3.600c.4 0 .7 .3 .7 .7v1M.5 8.200l1.700-4.300h8.600L9.100 8.200z" fill="none" stroke="#333" stroke-width="1.05" stroke-linejoin="round"/></svg><div style="position:absolute;left:132.9px;top:0">电脑软件</div><svg style="position:absolute;left:188.7px;top:4.3px;overflow:visible;" width="11.5" height="9" viewBox="0 0 11.5 9"><path d="M.5 8.200V1.300c0-.4 .3-.7 .7-.7h2.500l1.200 1.300h3.600c.4 0 .7 .3 .7 .7v1M.5 8.200l1.700-4.300h8.600L9.100 8.200z" fill="none" stroke="#333" stroke-width="1.05" stroke-linejoin="round"/></svg><div style="position:absolute;left:203.7px;top:0">软件工具</div></div><div class="meta"><div style="position:absolute;left:.1px;top:-.7px;width:14.300px;height:14.600px;border-radius:50%;background:linear-gradient(160deg,#d4ecd8 0%,#e3eef6 45%,#dfe8f4 100%);overflow:hidden"><div style="position:absolute;left:4.700px;top:.8px;width:5.200px;height:4.800px;border-radius:50%;background:#1c1c1e"></div><div style="position:absolute;left:5.800px;top:4.200px;width:3px;height:2.600px;border-radius:40%;background:#6e5446"></div><div style="position:absolute;left:3.600px;top:6.200px;width:7.200px;height:6.500px;border-radius:2.500px 2.500px 1px 1px;background:linear-gradient(#bdbdbd,#a9acb0)"></div><div style="position:absolute;left:6.600px;top:9.500px;width:2.600px;height:3px;background:#5a7fa8"></div><div style="position:absolute;left:2.600px;top:11.300px;width:7.500px;height:3.400px;border-radius:1.500px;background:#d5822c"></div></div><div style="position:absolute;left:8.400px;top:6.300px;width:7px;height:7px;border-radius:50%;background:radial-gradient(circle,#6f55dc 0 30%,#a997ec 62%,#cfc5f4 100%)"></div><div style="position:absolute;left:19.400px;top:0">qinxi</div><div style="position:absolute;left:46.900px;top:4.100px;width:6.200px;height:6.200px;border-radius:50%;border:1.200px solid #869ff0"></div><div style="position:absolute;left:58.300px;top:0">3天前</div></div><div class="st" style="right:15.200px;display:flex;align-items:center"><svg width="10.200" height="9.800" viewBox="0 0 10.200 9.800" style="position:static;margin-right:1.500px;margin-top:.4px"><path d="M.9 .5h8.400c.4 0 .7 .3 .7 .7v5.600c0 .4-.3 .7-.7 .7H4.200L2 9.400V7.500H.9c-.4 0-.7-.3-.7-.7V1.200C.2 .8 .5 .5 .9 .5z" fill="none" stroke="#333" stroke-width="1.05"/><circle cx="2.900" cy="4" r=".65" fill="#444"/><circle cx="5.100" cy="4" r=".65" fill="#444"/><circle cx="7.300" cy="4" r=".65" fill="#444"/></svg><span style="display:inline-block;width:5.1px;height:14px;overflow:visible"><span style="display:inline-block;font-size:10.9px;line-height:14px;transform:scaleX(.84);transform-origin:0 50%;color:#3a3a3a">0</span></span><svg width="9.800" height="7" viewBox="0 0 10 7" style="position:static;margin-left:6.600px;margin-right:1.900px;margin-top:.6px"><path d="M.3 3.500C1.500 1.500 3.100 .5 5 .5s3.500 1 4.700 3C8.500 5.500 6.900 6.500 5 6.500S1.500 5.500 .3 3.500z" fill="none" stroke="#444" stroke-width=".8"/><circle cx="5" cy="3.500" r="1.500" fill="none" stroke="#444" stroke-width=".8"/></svg><span style="display:inline-block;width:15.3px;height:14px;overflow:visible"><span style="display:inline-block;font-size:10.9px;line-height:14px;transform:scaleX(.84);transform-origin:0 50%;color:#3a3a3a">913</span></span><svg width="8.600" height="9.200" viewBox="0 0 9 9.400" style="position:static;margin-left:6.500px;margin-right:2.500px;margin-top:-.2px"><path d="M.5 4.200h1.900v4.700H.5zM2.400 4.400l2-3.700c.8 0 1.300 .5 1.200 1.400L5.300 3.700h2.300c.7 0 1.100 .5 1 1.200l-.6 3.100c-.1 .6-.5 .9-1.100 .9H2.400" fill="none" stroke="#444" stroke-width=".8" stroke-linejoin="round"/></svg><span style="display:inline-block;width:10.2px;height:14px;overflow:visible"><span style="display:inline-block;font-size:10.9px;line-height:14px;transform:scaleX(.84);transform-origin:0 50%;color:#3a3a3a">13</span></span></div></div>
<div class="card" style="left:512.7px;top:314.2px"><div class="ttl">装机必备！史上最便捷万能格式转换工具，一键转换音视频、图片、文档格式，免费无广告 F<span class="el">…</span></div><div class="th" style="background:#000"><div style="position:absolute;left:14.500px;top:5px;width:22.200px;height:22.200px;border-radius:50%;background:#1ea6b2"></div><div style="position:absolute;left:18.800px;top:10.400px;width:8.500px;height:9.500px;background:#0d6a76"></div><div style="position:absolute;left:23.400px;top:12px;width:8.500px;height:10.500px;background:repeating-linear-gradient(#f4f4f4 0 1.500px,#e2e2e2 1.500px 2.200px)"></div><svg style="position:absolute;left:39.6px;top:11.8px;overflow:visible;" width="13.5" height="9" viewBox="0 0 13.5 9"><path d="M.5 2.800h12M9.600 .4l3 2.400" fill="none" stroke="#d81f72" stroke-width="1.700"/><path d="M13 6.200H1M3.900 8.600L.9 6.200" fill="none" stroke="#d81f72" stroke-width="1.700"/></svg><div style="position:absolute;left:55px;top:4.800px;width:22.600px;height:22.600px;border-radius:50%;background:#1e84e4"></div><svg style="position:absolute;left:59.2px;top:10px;overflow:visible;" width="15" height="12.5" viewBox="0 0 15 12.5"><circle cx="3.400" cy="2.400" r="2" fill="none" stroke="#fff" stroke-width="1.100"/><circle cx="8.200" cy="2.400" r="2" fill="none" stroke="#fff" stroke-width="1.100"/><rect x=".8" y="4.800" width="9.600" height="7" rx="1" fill="#fff"/><path d="M10.400 8.300L14 5.400v6z" fill="#fff"/></svg><div style="font-weight:900;white-space:nowrap;position:absolute;left:11px;top:30px;font-size:11.900px;line-height:15px;color:#fff">万能格式转换</div><div style="font-weight:900;white-space:nowrap;position:absolute;left:6px;top:47.200px;font-size:11.700px;line-height:15px;color:#f4f000">免费<span style="color:#ff1238">无广告</span><span style="color:#34e234">版本</span></div></div><div class="ds">装机必备！史上最便捷万能格式转换工具，一键转换音视频、图片、文<br>档格式，免费无广告 FileConverterFileConverter支持转换的文件格式<span class="el">…</span></div><div class="tags"><div class="vip">免费资源</div><svg style="position:absolute;left:59.5px;top:4.3px;overflow:visible;" width="11.5" height="9" viewBox="0 0 11.5 9"><path d="M.5 8.200V1.300c0-.4 .3-.7 .7-.7h2.500l1.200 1.300h3.600c.4 0 .7 .3 .7 .7v1M.5 8.200l1.700-4.300h8.600L9.100 8.200z" fill="none" stroke="#333" stroke-width="1.05" stroke-linejoin="round"/></svg><div style="position:absolute;left:74.5px;top:0">电脑软件</div><svg style="position:absolute;left:130.3px;top:4.3px;overflow:visible;" width="11.5" height="9" viewBox="0 0 11.5 9"><path d="M.5 8.200V1.300c0-.4 .3-.7 .7-.7h2.500l1.200 1.300h3.600c.4 0 .7 .3 .7 .7v1M.5 8.200l1.700-4.300h8.600L9.100 8.200z" fill="none" stroke="#333" stroke-width="1.05" stroke-linejoin="round"/></svg><div style="position:absolute;left:145.3px;top:0">软件工具</div></div><div class="meta"><div style="position:absolute;left:.1px;top:-.7px;width:14.300px;height:14.600px;border-radius:50%;background:linear-gradient(160deg,#d4ecd8 0%,#e3eef6 45%,#dfe8f4 100%);overflow:hidden"><div style="position:absolute;left:4.700px;top:.8px;width:5.200px;height:4.800px;border-radius:50%;background:#1c1c1e"></div><div style="position:absolute;left:5.800px;top:4.200px;width:3px;height:2.600px;border-radius:40%;background:#6e5446"></div><div style="position:absolute;left:3.600px;top:6.200px;width:7.200px;height:6.500px;border-radius:2.500px 2.500px 1px 1px;background:linear-gradient(#bdbdbd,#a9acb0)"></div><div style="position:absolute;left:6.600px;top:9.500px;width:2.600px;height:3px;background:#5a7fa8"></div><div style="position:absolute;left:2.600px;top:11.300px;width:7.500px;height:3.400px;border-radius:1.500px;background:#d5822c"></div></div><div style="position:absolute;left:8.400px;top:6.300px;width:7px;height:7px;border-radius:50%;background:radial-gradient(circle,#6f55dc 0 30%,#a997ec 62%,#cfc5f4 100%)"></div><div style="position:absolute;left:19.400px;top:0">qinxi</div><div style="position:absolute;left:46.900px;top:4.100px;width:6.200px;height:6.200px;border-radius:50%;border:1.200px solid #869ff0"></div><div style="position:absolute;left:58.300px;top:0">3天前</div></div><div class="st" style="right:15.200px;display:flex;align-items:center"><svg width="10.200" height="9.800" viewBox="0 0 10.200 9.800" style="position:static;margin-right:1.500px;margin-top:.4px"><path d="M.9 .5h8.400c.4 0 .7 .3 .7 .7v5.600c0 .4-.3 .7-.7 .7H4.200L2 9.400V7.500H.9c-.4 0-.7-.3-.7-.7V1.200C.2 .8 .5 .5 .9 .5z" fill="none" stroke="#333" stroke-width="1.05"/><circle cx="2.900" cy="4" r=".65" fill="#444"/><circle cx="5.100" cy="4" r=".65" fill="#444"/><circle cx="7.300" cy="4" r=".65" fill="#444"/></svg><span style="display:inline-block;width:5.1px;height:14px;overflow:visible"><span style="display:inline-block;font-size:10.9px;line-height:14px;transform:scaleX(.84);transform-origin:0 50%;color:#3a3a3a">1</span></span><svg width="9.800" height="7" viewBox="0 0 10 7" style="position:static;margin-left:6.600px;margin-right:1.900px;margin-top:.6px"><path d="M.3 3.500C1.500 1.500 3.100 .5 5 .5s3.500 1 4.700 3C8.500 5.500 6.900 6.500 5 6.500S1.500 5.500 .3 3.500z" fill="none" stroke="#444" stroke-width=".8"/><circle cx="5" cy="3.500" r="1.500" fill="none" stroke="#444" stroke-width=".8"/></svg><span style="display:inline-block;width:15.3px;height:14px;overflow:visible"><span style="display:inline-block;font-size:10.9px;line-height:14px;transform:scaleX(.84);transform-origin:0 50%;color:#3a3a3a">694</span></span><svg width="8.600" height="9.200" viewBox="0 0 9 9.400" style="position:static;margin-left:6.500px;margin-right:2.500px;margin-top:-.2px"><path d="M.5 4.200h1.900v4.700H.5zM2.400 4.400l2-3.700c.8 0 1.300 .5 1.200 1.400L5.300 3.700h2.300c.7 0 1.100 .5 1 1.200l-.6 3.100c-.1 .6-.5 .9-1.100 .9H2.400" fill="none" stroke="#444" stroke-width=".8" stroke-linejoin="round"/></svg><span style="display:inline-block;width:10.2px;height:14px;overflow:visible"><span style="display:inline-block;font-size:10.9px;line-height:14px;transform:scaleX(.84);transform-origin:0 50%;color:#3a3a3a">12</span></span></div></div>
<div class="card" style="left:10px;top:450.0px"><div class="ttl">宝藏级AI图片处理工具！内置海量功能如Ai重绘、无损放大、抠图、照片上色等，且全部免<span class="el">…</span></div><div class="th" style="background:repeating-conic-gradient(from 0deg at 50% 55%,#fff 0deg 3deg,#e9e9e9 3deg 4.5deg,#fff 4.5deg 8deg,#f0f0f0 8deg 9deg)"><div style="position:absolute;left:5.300px;top:7.500px;width:87.800px;height:14px;border-radius:5px;background:#0a0a0a"></div><div style="font-weight:900;white-space:nowrap;position:absolute;left:8.600px;top:7.700px;font-size:9.800px;line-height:12px;color:#fff"><span style="font-weight:bold">Ai</span>宝藏工具&nbsp;<span style="color:#f4ee00">修图必备</span></div></div><div class="ds">宝藏级AI图片处理工具！内置海量功能如Ai重绘、无损放大、抠图、照片<br>上色等，且全部免费使用，修图必备的Ai宝藏工具，一键处理各种图片<span class="el">…</span></div><div class="tags"><div class="vip">免费资源</div><svg style="position:absolute;left:59.5px;top:4.3px;overflow:visible;" width="11.5" height="9" viewBox="0 0 11.5 9"><path d="M.5 8.200V1.300c0-.4 .3-.7 .7-.7h2.500l1.200 1.300h3.600c.4 0 .7 .3 .7 .7v1M.5 8.200l1.700-4.300h8.600L9.100 8.200z" fill="none" stroke="#333" stroke-width="1.05" stroke-linejoin="round"/></svg><div style="position:absolute;left:74.5px;top:0">电脑软件</div><svg style="position:absolute;left:130.3px;top:4.3px;overflow:visible;" width="11.5" height="9" viewBox="0 0 11.5 9"><path d="M.5 8.200V1.300c0-.4 .3-.7 .7-.7h2.500l1.200 1.300h3.600c.4 0 .7 .3 .7 .7v1M.5 8.200l1.700-4.300h8.600L9.100 8.200z" fill="none" stroke="#333" stroke-width="1.05" stroke-linejoin="round"/></svg><div style="position:absolute;left:145.3px;top:0">软件工具</div></div><div class="meta"><div style="position:absolute;left:.1px;top:-.7px;width:14.300px;height:14.600px;border-radius:50%;background:linear-gradient(160deg,#d4ecd8 0%,#e3eef6 45%,#dfe8f4 100%);overflow:hidden"><div style="position:absolute;left:4.700px;top:.8px;width:5.200px;height:4.800px;border-radius:50%;background:#1c1c1e"></div><div style="position:absolute;left:5.800px;top:4.200px;width:3px;height:2.600px;border-radius:40%;background:#6e5446"></div><div style="position:absolute;left:3.600px;top:6.200px;width:7.200px;height:6.500px;border-radius:2.500px 2.500px 1px 1px;background:linear-gradient(#bdbdbd,#a9acb0)"></div><div style="position:absolute;left:6.600px;top:9.500px;width:2.600px;height:3px;background:#5a7fa8"></div><div style="position:absolute;left:2.600px;top:11.300px;width:7.500px;height:3.400px;border-radius:1.500px;background:#d5822c"></div></div><div style="position:absolute;left:8.400px;top:6.300px;width:7px;height:7px;border-radius:50%;background:radial-gradient(circle,#6f55dc 0 30%,#a997ec 62%,#cfc5f4 100%)"></div><div style="position:absolute;left:19.400px;top:0">qinxi</div><div style="position:absolute;left:46.900px;top:4.100px;width:6.200px;height:6.200px;border-radius:50%;border:1.200px solid #869ff0"></div><div style="position:absolute;left:58.300px;top:0">4天前</div></div><div class="st" style="right:15.200px;display:flex;align-items:center"><svg width="10.200" height="9.800" viewBox="0 0 10.200 9.800" style="position:static;margin-right:1.500px;margin-top:.4px"><path d="M.9 .5h8.400c.4 0 .7 .3 .7 .7v5.600c0 .4-.3 .7-.7 .7H4.200L2 9.400V7.500H.9c-.4 0-.7-.3-.7-.7V1.200C.2 .8 .5 .5 .9 .5z" fill="none" stroke="#333" stroke-width="1.05"/><circle cx="2.900" cy="4" r=".65" fill="#444"/><circle cx="5.100" cy="4" r=".65" fill="#444"/><circle cx="7.300" cy="4" r=".65" fill="#444"/></svg><span style="display:inline-block;width:5.1px;height:14px;overflow:visible"><span style="display:inline-block;font-size:10.9px;line-height:14px;transform:scaleX(.84);transform-origin:0 50%;color:#3a3a3a">0</span></span><svg width="9.800" height="7" viewBox="0 0 10 7" style="position:static;margin-left:6.600px;margin-right:1.900px;margin-top:.6px"><path d="M.3 3.500C1.500 1.500 3.100 .5 5 .5s3.500 1 4.700 3C8.500 5.500 6.900 6.500 5 6.500S1.500 5.500 .3 3.500z" fill="none" stroke="#444" stroke-width=".8"/><circle cx="5" cy="3.500" r="1.500" fill="none" stroke="#444" stroke-width=".8"/></svg><span style="display:inline-block;width:15.3px;height:14px;overflow:visible"><span style="display:inline-block;font-size:10.9px;line-height:14px;transform:scaleX(.84);transform-origin:0 50%;color:#3a3a3a">820</span></span><svg width="8.600" height="9.200" viewBox="0 0 9 9.400" style="position:static;margin-left:6.500px;margin-right:2.500px;margin-top:-.2px"><path d="M.5 4.200h1.900v4.700H.5zM2.400 4.400l2-3.700c.8 0 1.300 .5 1.200 1.400L5.300 3.700h2.300c.7 0 1.100 .5 1 1.200l-.6 3.100c-.1 .6-.5 .9-1.100 .9H2.400" fill="none" stroke="#444" stroke-width=".8" stroke-linejoin="round"/></svg><span style="display:inline-block;width:5.1px;height:14px;overflow:visible"><span style="display:inline-block;font-size:10.9px;line-height:14px;transform:scaleX(.84);transform-origin:0 50%;color:#3a3a3a">9</span></span></div></div>
<div class="card" style="left:512.7px;top:450.0px"><div class="ttl">Office2024绿色精简四合一版本，无需登录，内置激活永久免费使用！办公一族必备办公工<span class="el">…</span></div><div class="th" style="background:#fff"><svg style="position:absolute;left:3.4px;top:4.3px;overflow:visible;" width="24" height="28" viewBox="0 0 24 28"><path d="M0 6.500L14.800 .2 23 2.600v22.800l-8.200 2.400L0 22l14.800 1.800V5.200L5.200 7.400v12.400L0 22z" fill="#f4140c"/></svg><div style="position:absolute;left:38.500px;top:12.300px;font-size:10px;line-height:12px;font-weight:bold;color:#222;white-space:nowrap">Microsoft</div></div><div class="ds">Office2024绿色精简四合一版本，无需登录，内置激活永久免费使用！<br>办公一族必备办公工具，包含Word、Excel、PowerPoint、Access四<span class="el">…</span></div><div class="tags"><div class="vip">免费资源</div><svg style="position:absolute;left:59.5px;top:4.3px;overflow:visible;" width="11.5" height="9" viewBox="0 0 11.5 9"><path d="M.5 8.200V1.300c0-.4 .3-.7 .7-.7h2.500l1.200 1.300h3.600c.4 0 .7 .3 .7 .7v1M.5 8.200l1.700-4.300h8.600L9.100 8.200z" fill="none" stroke="#333" stroke-width="1.05" stroke-linejoin="round"/></svg><div style="position:absolute;left:74.5px;top:0">电脑软件</div><svg style="position:absolute;left:130.3px;top:4.3px;overflow:visible;" width="11.5" height="9" viewBox="0 0 11.5 9"><path d="M.5 8.200V1.300c0-.4 .3-.7 .7-.7h2.500l1.200 1.300h3.600c.4 0 .7 .3 .7 .7v1M.5 8.200l1.700-4.300h8.600L9.100 8.200z" fill="none" stroke="#333" stroke-width="1.05" stroke-linejoin="round"/></svg><div style="position:absolute;left:145.3px;top:0">软件工具</div></div><div class="meta"><div style="position:absolute;left:.1px;top:-.7px;width:14.300px;height:14.600px;border-radius:50%;background:linear-gradient(160deg,#d4ecd8 0%,#e3eef6 45%,#dfe8f4 100%);overflow:hidden"><div style="position:absolute;left:4.700px;top:.8px;width:5.200px;height:4.800px;border-radius:50%;background:#1c1c1e"></div><div style="position:absolute;left:5.800px;top:4.200px;width:3px;height:2.600px;border-radius:40%;background:#6e5446"></div><div style="position:absolute;left:3.600px;top:6.200px;width:7.200px;height:6.500px;border-radius:2.500px 2.500px 1px 1px;background:linear-gradient(#bdbdbd,#a9acb0)"></div><div style="position:absolute;left:6.600px;top:9.500px;width:2.600px;height:3px;background:#5a7fa8"></div><div style="position:absolute;left:2.600px;top:11.300px;width:7.500px;height:3.400px;border-radius:1.500px;background:#d5822c"></div></div><div style="position:absolute;left:8.400px;top:6.300px;width:7px;height:7px;border-radius:50%;background:radial-gradient(circle,#6f55dc 0 30%,#a997ec 62%,#cfc5f4 100%)"></div><div style="position:absolute;left:19.400px;top:0">qinxi</div><div style="position:absolute;left:46.900px;top:4.100px;width:6.200px;height:6.200px;border-radius:50%;border:1.200px solid #869ff0"></div><div style="position:absolute;left:58.300px;top:0">4天前</div></div><div class="st" style="right:15.200px;display:flex;align-items:center"><svg width="10.200" height="9.800" viewBox="0 0 10.200 9.800" style="position:static;margin-right:1.500px;margin-top:.4px"><path d="M.9 .5h8.400c.4 0 .7 .3 .7 .7v5.600c0 .4-.3 .7-.7 .7H4.200L2 9.400V7.500H.9c-.4 0-.7-.3-.7-.7V1.200C.2 .8 .5 .5 .9 .5z" fill="none" stroke="#333" stroke-width="1.05"/><circle cx="2.900" cy="4" r=".65" fill="#444"/><circle cx="5.100" cy="4" r=".65" fill="#444"/><circle cx="7.300" cy="4" r=".65" fill="#444"/></svg><span style="display:inline-block;width:5.1px;height:14px;overflow:visible"><span style="display:inline-block;font-size:10.9px;line-height:14px;transform:scaleX(.84);transform-origin:0 50%;color:#3a3a3a">2</span></span><svg width="9.800" height="7" viewBox="0 0 10 7" style="position:static;margin-left:6.600px;margin-right:1.900px;margin-top:.6px"><path d="M.3 3.500C1.500 1.500 3.100 .5 5 .5s3.500 1 4.700 3C8.500 5.500 6.900 6.500 5 6.500S1.500 5.500 .3 3.500z" fill="none" stroke="#444" stroke-width=".8"/><circle cx="5" cy="3.500" r="1.500" fill="none" stroke="#444" stroke-width=".8"/></svg><span style="display:inline-block;width:20.4px;height:14px;overflow:visible"><span style="display:inline-block;font-size:10.9px;line-height:14px;transform:scaleX(.84);transform-origin:0 50%;color:#3a3a3a">1024</span></span><svg width="8.600" height="9.200" viewBox="0 0 9 9.400" style="position:static;margin-left:6.500px;margin-right:2.500px;margin-top:-.2px"><path d="M.5 4.200h1.900v4.700H.5zM2.400 4.400l2-3.700c.8 0 1.300 .5 1.200 1.400L5.300 3.700h2.300c.7 0 1.100 .5 1 1.200l-.6 3.100c-.1 .6-.5 .9-1.100 .9H2.400" fill="none" stroke="#444" stroke-width=".8" stroke-linejoin="round"/></svg><span style="display:inline-block;width:10.2px;height:14px;overflow:visible"><span style="display:inline-block;font-size:10.9px;line-height:14px;transform:scaleX(.84);transform-origin:0 50%;color:#3a3a3a">21</span></span></div></div>
<div style="position:absolute;left:970.800px;top:390px;width:30.500px;height:110px;background:#fff;border-radius:5px;z-index:5"></div>
<svg style="position:absolute;left:979.6px;top:401.6px;overflow:visible;z-index:6" width="12" height="10.4" viewBox="0 0 12 10.4"><path d="M.4 3.200l2.800 2.500 2.800-5 2.800 5 2.800-2.500-1.100 6.800H1.500z" fill="#ff7f3a"/><circle cx="6" cy="1.100" r="1" fill="#ff7f3a"/><circle cx=".8" cy="3" r=".8" fill="#ff7f3a"/><circle cx="11.200" cy="3" r=".8" fill="#ff7f3a"/><rect x="3.800" y="7" width="4.400" height="1" rx=".5" fill="#ffd2b0"/></svg>
<svg style="position:absolute;left:979px;top:434.6px;overflow:visible;z-index:6" width="13" height="10.8" viewBox="0 0 13 10.8"><ellipse cx="4.800" cy="4" rx="4.600" ry="3.800" fill="#9a9da3"/><path d="M2.200 6.800l-.6 2 2.200-1.200z" fill="#9a9da3"/><ellipse cx="9" cy="6.800" rx="3.800" ry="3.200" fill="#8a8d94" stroke="#fff" stroke-width=".5"/><path d="M10.800 9.400l.8 1.300-2-.6z" fill="#8a8d94"/></svg>
<svg style="position:absolute;left:980.6px;top:469px;overflow:visible;z-index:6" width="9.5" height="11" viewBox="0 0 9.5 11"><path d="M4.600 .6C3.400 3.800 5 7.500 9 8.500 7.600 10.300 4.600 10.700 2.500 9.100 -.2 7 -.1 2.400 4.600 .6z" fill="none" stroke="#b0b3ba" stroke-width=".9"/></svg>
<div style="position:absolute;left:1014.800px;top:14px;width:9.200px;height:484px;background:#f1f1f1;z-index:20"></div>
<div style="position:absolute;left:1015.600px;top:304px;width:8.400px;height:181.500px;background:#c1c1c1;z-index:21"></div>
<svg style="position:absolute;left:1017.2px;top:18.599999999999994px;overflow:visible;z-index:21" width="4.6" height="2.8" viewBox="0 0 4.6 2.8"><path d="M0 2.800L2.300 0l2.300 2.800z" fill="#505050"/></svg>
<svg style="position:absolute;left:1017.2px;top:491px;overflow:visible;z-index:21" width="4.6" height="2.8" viewBox="0 0 4.6 2.8"><path d="M0 0h4.600L2.300 2.800z" fill="#505050"/></svg>
</div>
</body></html>
